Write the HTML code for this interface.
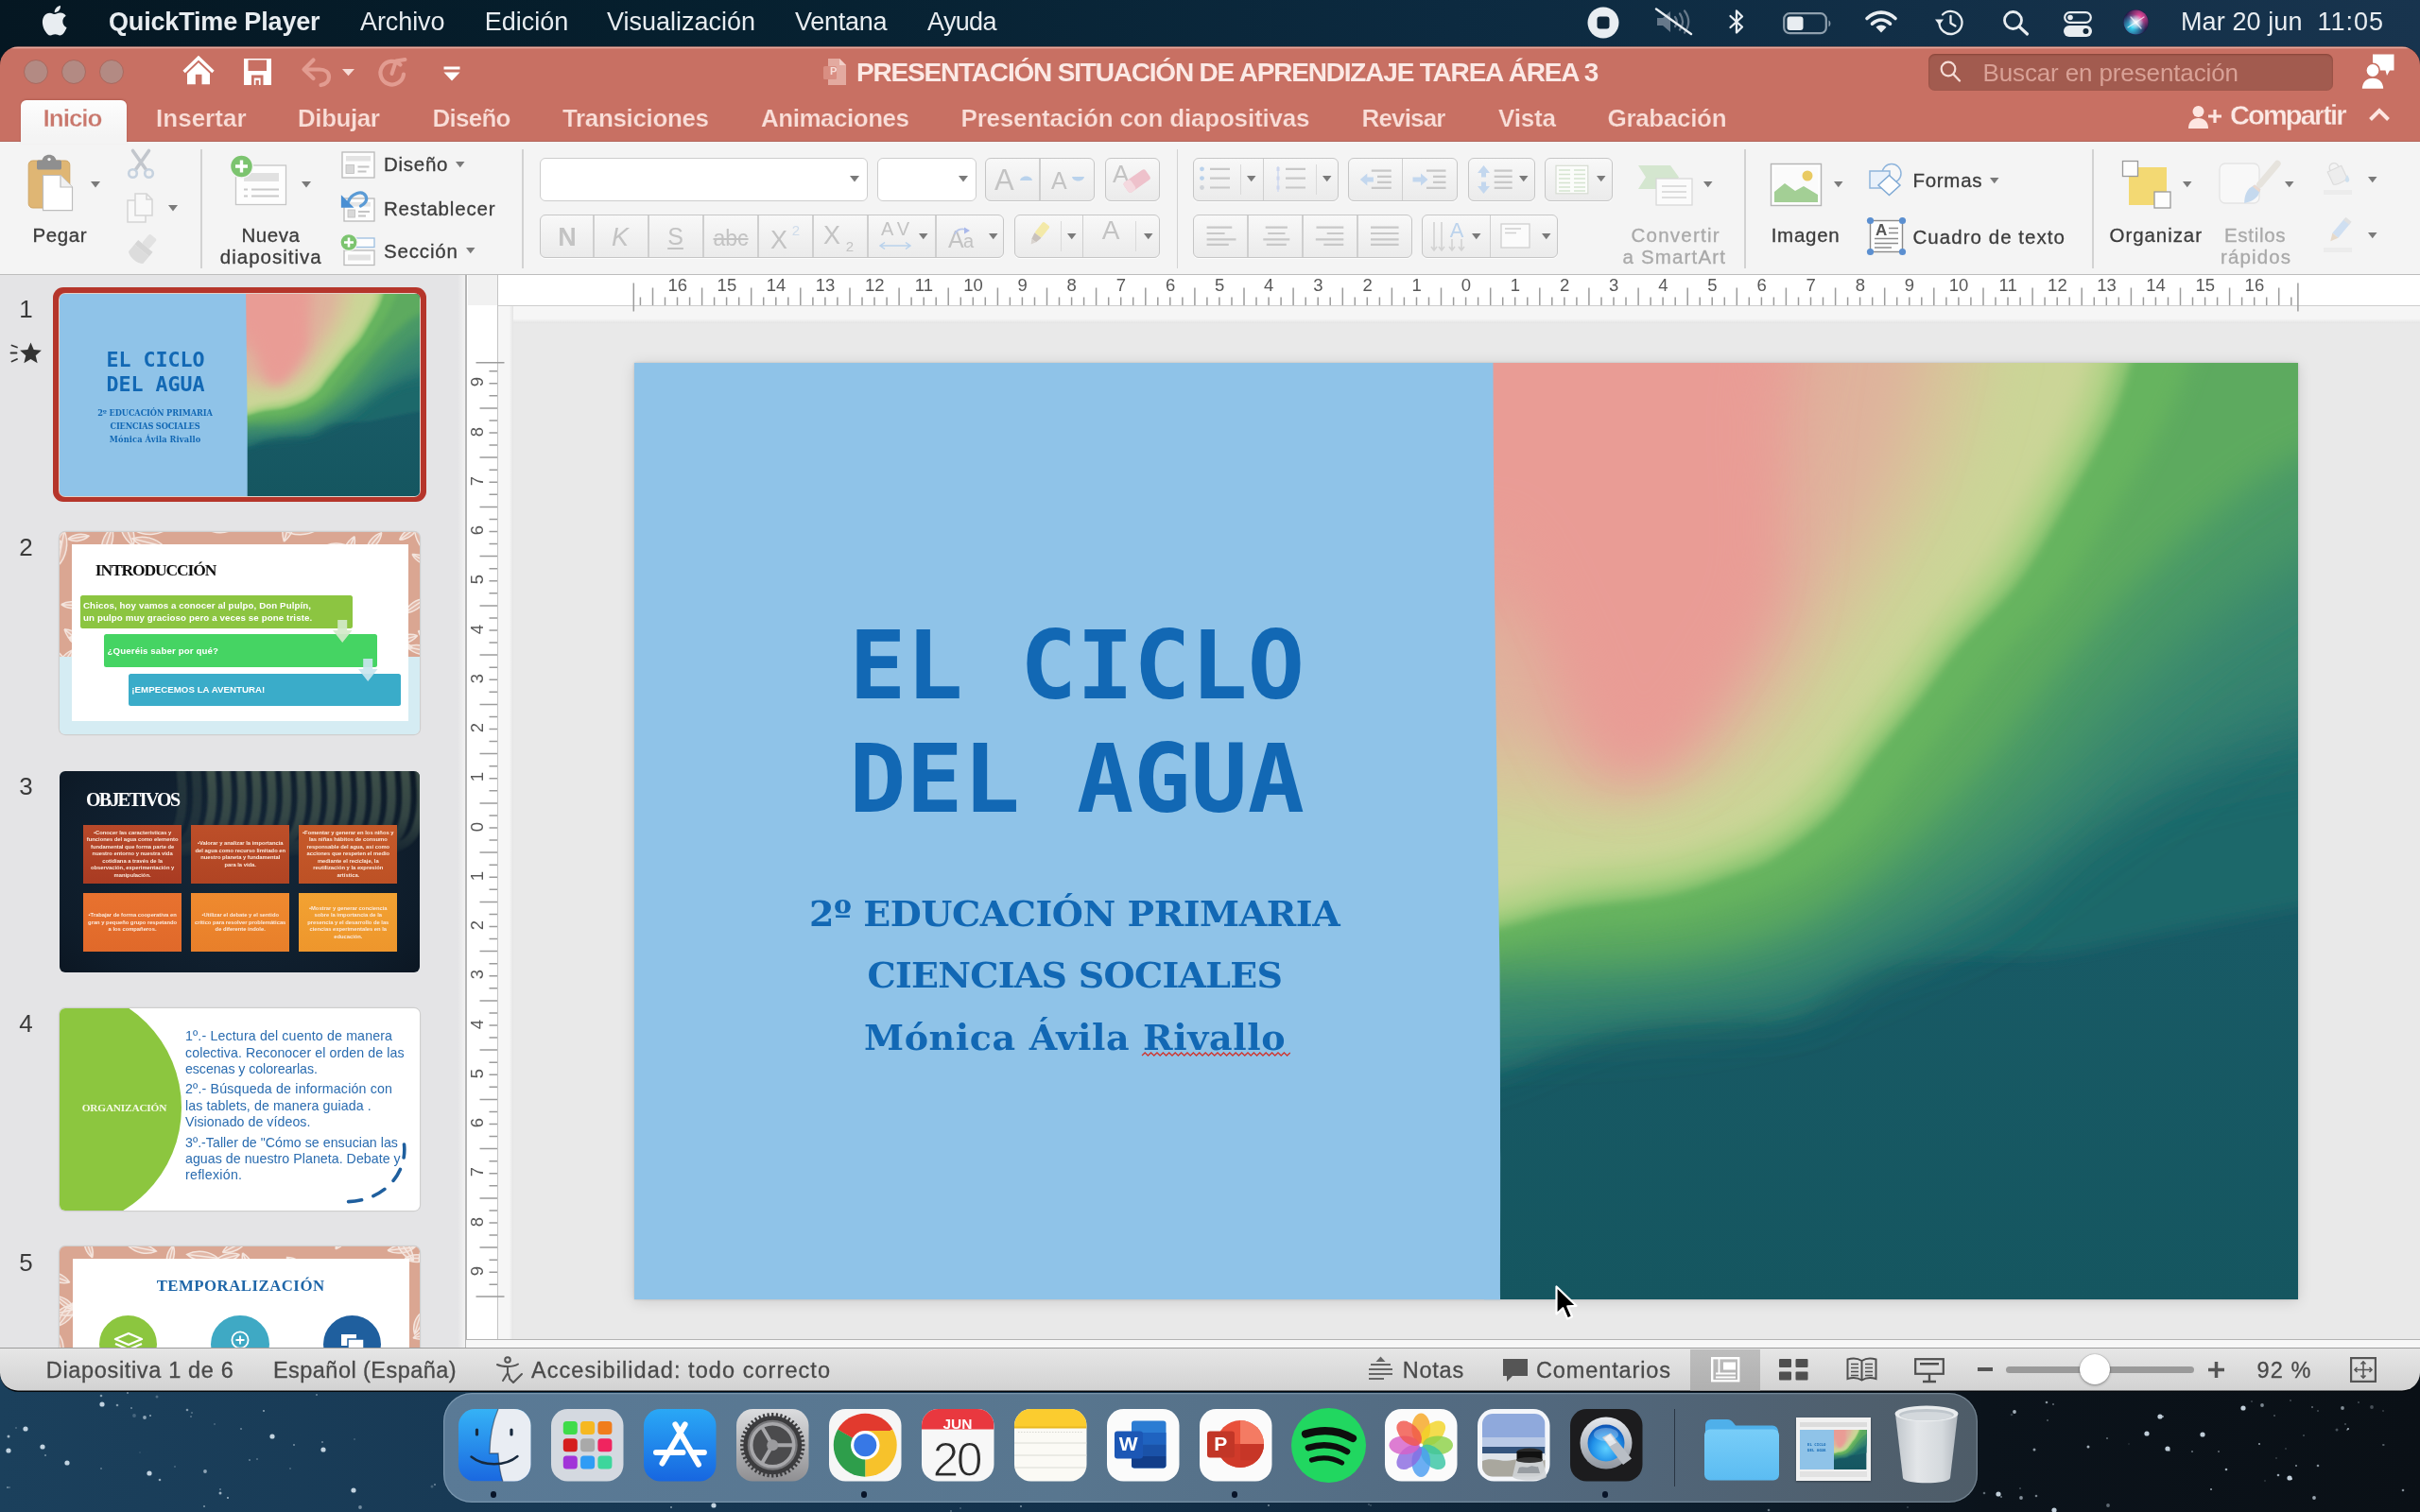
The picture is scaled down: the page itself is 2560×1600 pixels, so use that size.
<!DOCTYPE html>
<html lang="es">
<head>
<meta charset="utf-8">
<title>PRESENTACIÓN SITUACIÓN DE APRENDIZAJE TAREA ÁREA 3</title>
<style>
*{box-sizing:border-box;margin:0;padding:0}
html,body{width:2560px;height:1600px;overflow:hidden}
body{position:relative;font-family:"Liberation Sans",sans-serif;background:#0d2436;color:#222}
.abs{position:absolute}
.t{position:absolute;white-space:nowrap;line-height:1}
svg{position:absolute;overflow:visible}
#root{position:absolute;left:0;top:0;width:2560px;height:1600px;will-change:transform}
#desk{left:0;top:0;width:2560px;height:1600px;background:
 linear-gradient(90deg,#051722 0%,#06202f 30%,#0c2a40 60%,#18344e 100%);}
#deskb{left:0;top:1440px;width:2560px;height:160px;background:
 linear-gradient(90deg,#1b405c 0%,#173853 25%,#12304a 45%,#0d2030 68%,#0b131b 82%,#0a1016 100%);}
#menubar{left:0;top:0;width:2560px;height:50px;color:#e9eef2;font-size:28px}
#menubar .t{top:10px;font-size:28px;color:#e8edf1}
#win{left:0;top:0;width:2560px;height:1600px;clip-path:inset(49.600px 0 128.500px 0 round 19px)}
#winsh{left:0;top:48.600px;width:2560px;height:1424.400px;border-radius:20px;background:#02060a}
#title{left:0;top:49px;width:2560px;height:101px;background:#c87063;border-bottom:1.500px solid #b3665b;box-shadow:inset 0 2.200px .500px rgba(255,208,200,.6)}
#ribbon{left:0;top:149.500px;width:2560px;height:141.500px;background:#f4f4f4;border-bottom:1.500px solid #bdbdbd}
#panel{left:0;top:291px;width:493px;height:1136px;background:#e4e4e6}
#status{left:0;top:1426px;width:2560px;height:46px;background:linear-gradient(#e6e6e6,#d2d2d2);border-top:1.500px solid #9c9c9c}
</style>
</head>
<body>
<div id="root">
<div id="desk" class="abs"></div>
<div id="deskb" class="abs"></div>
<div id="winsh" class="abs"></div>
<div id="menubar" class="abs"><svg style="left:41.5px;top:5.5px;" width="31.5" height="31.5" viewBox="0 0 24 24"><path d="M12.152 6.896c-.948 0-2.415-1.078-3.96-1.04-2.04.027-3.91 1.183-4.961 3.014-2.117 3.675-.546 9.103 1.519 12.09 1.013 1.454 2.208 3.09 3.792 3.039 1.52-.065 2.09-.987 3.935-.987 1.831 0 2.35.987 3.96.948 1.637-.026 2.676-1.48 3.676-2.948 1.156-1.688 1.636-3.325 1.662-3.415-.039-.013-3.182-1.221-3.22-4.857-.026-3.04 2.48-4.494 2.597-4.559-1.429-2.09-3.623-2.324-4.39-2.376-2-.156-3.675 1.09-4.61 1.09zM15.53 3.83c.843-1.012 1.4-2.427 1.245-3.83-1.207.052-2.662.805-3.532 1.818-.78.896-1.454 2.338-1.273 3.714 1.338.104 2.715-.688 3.559-1.701" fill="#e8edf1"/></svg><span class="t" style="left:115.0px;top:10.3px;font-size:27px;color:#e8edf1;font-weight:700;letter-spacing:-0.17px;">QuickTime Player</span><span class="t" style="left:381.0px;top:10.3px;font-size:27px;color:#e8edf1;letter-spacing:-0.09px;">Archivo</span><span class="t" style="left:512.7px;top:10.3px;font-size:27px;color:#e8edf1;letter-spacing:-0.01px;">Edición</span><span class="t" style="left:642.0px;top:10.3px;font-size:27px;color:#e8edf1;letter-spacing:-0.01px;">Visualización</span><span class="t" style="left:841.0px;top:10.3px;font-size:27px;color:#e8edf1;letter-spacing:-0.25px;">Ventana</span><span class="t" style="left:981.0px;top:10.3px;font-size:27px;color:#e8edf1;letter-spacing:-0.64px;">Ayuda</span><span class="t" style="left:2307.0px;top:10.3px;font-size:27px;color:#e8edf1;letter-spacing:0.10px;">Mar 20 jun</span><span class="t" style="left:2451.5px;top:10.3px;font-size:27px;color:#e8edf1;letter-spacing:0.98px;">11:05</span><svg style="left:1679px;top:6.5px;" width="34" height="34" viewBox="0 0 34 34"><circle cx="17" cy="17" r="16.5" fill="#e8edf1"/><rect x="10.5" y="10.5" width="13" height="13" rx="3" fill="#0f2638"/></svg><svg style="left:1750px;top:8px;" width="42" height="30" viewBox="0 0 42 30"><g fill="#66788a"><path d="M3 11h6l8-7v22l-8-7H3z"/></g><g fill="none" stroke="#66788a" stroke-width="2.2" stroke-linecap="round"><path d="M22 10c2.2 3 2.2 7 0 10"/><path d="M27 6.500c4 5.500 4 11.500 0 17"/><path d="M32 3.500c5.500 7.500 5.500 15.500 0 23"/></g><path d="M2 1.500L39 28" stroke="#e8edf1" stroke-width="2.4" stroke-linecap="round"/></svg><svg style="left:1827px;top:9px;" width="20" height="28" viewBox="0 0 20 28"><path d="M3.500 8L16 19.500 10 25.500V2.500L16 8.500 3.500 20" fill="none" stroke="#e8edf1" stroke-width="2.3" stroke-linejoin="round" stroke-linecap="round"/></svg><svg style="left:1886px;top:12.5px;" width="54" height="24" viewBox="0 0 54 24"><rect x="1.200" y="1.200" width="44.600" height="21" rx="6" fill="none" stroke="#8fa0ae" stroke-width="2.200"/><rect x="4.500" y="4.500" width="17" height="14.500" rx="3" fill="#e8edf1"/><path d="M48.500 8.500c2.500.7 2.500 6 0 6.700z" fill="#8fa0ae"/></svg><svg style="left:1972px;top:10px;" width="36" height="26" viewBox="0 0 36 26"><g fill="none" stroke="#e8edf1" stroke-width="3.600" stroke-linecap="round"><path d="M3 9.500c9-8.500 21-8.500 30 0"/><path d="M8.500 15.200c6-5.500 13-5.500 19 0"/></g><path d="M18 24.500l-5.500-5.800c3.300-2.900 7.700-2.900 11 0z" fill="#e8edf1"/></svg><svg style="left:2046px;top:9px;" width="32" height="30" viewBox="0 0 32 30"><g fill="none" stroke="#e8edf1" stroke-width="2.300" stroke-linecap="round" stroke-linejoin="round"><path d="M5.500 15a12 12 0 1 0 3.500-8.500"/><path d="M17.500 8v7.500l5 3"/></g><path d="M1 11.500h9L5.500 17.500z" fill="#e8edf1"/></svg><svg style="left:2118px;top:10px;" width="30" height="28" viewBox="0 0 30 28"><circle cx="11.500" cy="11.500" r="9" fill="none" stroke="#e8edf1" stroke-width="2.800"/><path d="M18.300 18.300L26.500 26" stroke="#e8edf1" stroke-width="3.200" stroke-linecap="round"/></svg><svg style="left:2183px;top:11.5px;" width="30" height="27" viewBox="0 0 30 27"><rect x="1.200" y="1.200" width="27.600" height="10.600" rx="5.300" fill="none" stroke="#e8edf1" stroke-width="2.200"/><circle cx="7" cy="6.500" r="2.800" fill="#e8edf1"/><rect x="0" y="15" width="30" height="12" rx="6" fill="#e8edf1"/><circle cx="23.500" cy="21" r="3" fill="#0f2638"/></svg><svg style="left:2246px;top:10px;" width="27" height="27" viewBox="0 0 27 27"><defs><radialGradient id="siri1" cx="35%" cy="70%" r="55%"><stop offset="0" stop-color="#38e1ff"/><stop offset="1" stop-color="#38e1ff" stop-opacity="0"/></radialGradient><radialGradient id="siri2" cx="65%" cy="30%" r="55%"><stop offset="0" stop-color="#ff4fa3"/><stop offset="1" stop-color="#ff4fa3" stop-opacity="0"/></radialGradient><radialGradient id="siri3" cx="50%" cy="50%" r="30%"><stop offset="0" stop-color="#fff"/><stop offset="1" stop-color="#fff" stop-opacity="0"/></radialGradient></defs><circle cx="13.500" cy="13.500" r="13.500" fill="#231a4a"/><circle cx="13.500" cy="13.500" r="13" fill="url(#siri2)"/><circle cx="13.500" cy="13.500" r="13" fill="url(#siri1)"/><circle cx="13.500" cy="13.500" r="13" fill="url(#siri3)"/><path d="M5 19L22 8M8 8l11 12" stroke="#fff" stroke-width="1.300" opacity=".65" stroke-linecap="round"/></svg></div>
<div id="win" class="abs">
<div id="title" class="abs"></div>
<div id="ribbon" class="abs"></div>
<div class="abs" style="left:24.6px;top:62.8px;width:26.4px;height:26.4px;border-radius:50%;background:#b38a83;border:1.500px solid #a9685e"></div><div class="abs" style="left:64.6px;top:62.8px;width:26.4px;height:26.4px;border-radius:50%;background:#b38a83;border:1.500px solid #a9685e"></div><div class="abs" style="left:104.5px;top:62.8px;width:26.4px;height:26.4px;border-radius:50%;background:#b38a83;border:1.500px solid #a9685e"></div><svg style="left:190px;top:56px;" width="40" height="36" viewBox="0 0 40 36"><path d="M4.600 20L20 5.200 35.500 20" fill="none" stroke="#ffffff" stroke-width="3.400" stroke-linejoin="miter"/><path d="M8 21.800L20 10.300 32 21.800V33.300H23.500V22.800H16.800V33.300H8z" fill="#ffffff"/></svg><svg style="left:258px;top:62px;" width="29" height="28" viewBox="0 0 29 28"><path d="M0 0h29v28H0z" fill="#ffffff"/><rect x="4.500" y="1.500" width="19.500" height="11.500" fill="#c87063"/><rect x="8" y="17.500" width="12.500" height="10.500" fill="#c87063"/><rect x="10.800" y="20.500" width="6.800" height="7.500" fill="#ffffff"/><rect x="12.500" y="23" width="3.400" height="5" fill="#c87063"/></svg><svg style="left:319px;top:61px;" width="34" height="32" viewBox="0 0 34 32"><path d="M12.500 2.500L2.500 12.500l10 9.500" fill="none" stroke="#e29c91" stroke-width="4.200" stroke-linecap="round" stroke-linejoin="round"/><path d="M3.500 12.500h15.500c6 0 10 3.200 10 8S25.500 28 20.500 29" fill="none" stroke="#e29c91" stroke-width="4.200" stroke-linecap="round"/></svg><svg style="left:361.5px;top:73.2px;" width="13" height="7.2" viewBox="0 0 13 7.2"><path d="M0 0H13 L6.5 7.2Z" fill="#f7ddd8"/></svg><svg style="left:399px;top:59px;" width="34" height="35" viewBox="0 0 34 35"><path d="M24.500 9.500A12.300 12.300 0 1 0 28 19.500" fill="none" stroke="#e29c91" stroke-width="4.200" stroke-linecap="round"/><path d="M15.500 19L20 5.500l9.500-1.500" fill="none" stroke="#e29c91" stroke-width="4" stroke-linecap="round" stroke-linejoin="round"/></svg><svg style="left:469px;top:70px;" width="18" height="16" viewBox="0 0 18 16"><rect x="0.500" y="0.500" width="17" height="3" fill="#ffffff"/><path d="M0.500 6.500h17L9 15.500z" fill="#ffffff"/></svg><svg style="left:871px;top:62px;" width="24" height="28" viewBox="0 0 24 28"><path d="M5 0h12l7 7v21H5z" fill="#e3aaa0"/><path d="M17 0l7 7h-7z" fill="#f1cfc8"/><rect x="0" y="8" width="14" height="14" rx="1.500" fill="#d98e82"/></svg><span class="t" style="left:878.0px;top:11.0px;font-size:11px;color:#f6ddd8;font-weight:700;top:70px;">P</span><span class="t" style="left:906.0px;top:63.0px;font-size:28px;color:#fbe9e5;font-weight:700;letter-spacing:-1.19px;">PRESENTACIÓN SITUACIÓN DE APRENDIZAJE TAREA ÁREA 3</span><div class="abs" style="left:2040px;top:57px;width:427.5px;height:38.5px;border-radius:7px;background:#a25b4f;box-shadow:inset 0 1px 2px rgba(80,20,10,.35)"></div><svg style="left:2052px;top:64px;" width="23" height="24" viewBox="0 0 23 24"><circle cx="9" cy="9" r="7.300" fill="none" stroke="#f5dcd6" stroke-width="2.200"/><path d="M14.300 14.500L21 21.500" stroke="#f5dcd6" stroke-width="2.400" stroke-linecap="round"/></svg><span class="t" style="left:2097.5px;top:63.5px;font-size:26px;color:#d9a196;letter-spacing:-0.13px;">Buscar en presentación</span><svg style="left:2497px;top:56px;" width="38" height="40" viewBox="0 0 38 40"><path d="M13 1.500h22.500v17H31l-3 5.500-1.500-5.500H13z" fill="#ffffff"/><circle cx="13" cy="18.500" r="7.200" fill="#ffffff" stroke="#c87062" stroke-width="1.600"/><path d="M1 38.500c0-8 5-12.500 12-12.500s12 4.500 12 12.500z" fill="#ffffff" stroke="#c87062" stroke-width="1.600"/></svg><div class="abs" style="left:22px;top:106px;width:112px;height:46px;background:linear-gradient(#fdfdfd,#f4f4f4 85%);border-radius:6px 6px 0 0;box-shadow:0 -1px 2px rgba(120,40,30,.25)"></div><span class="t" style="left:45.5px;top:112.1px;font-size:26px;color:#c9776c;font-weight:700;letter-spacing:-0.98px;-webkit-text-stroke:.3px #f4f4f4;">Inicio</span><span class="t" style="left:165.0px;top:112.1px;font-size:26px;color:#f9ded8;font-weight:700;letter-spacing:0.02px;-webkit-text-stroke:.22px #c87062;">Insertar</span><span class="t" style="left:315.0px;top:112.1px;font-size:26px;color:#f9ded8;font-weight:700;letter-spacing:-0.43px;-webkit-text-stroke:.22px #c87062;">Dibujar</span><span class="t" style="left:457.5px;top:112.1px;font-size:26px;color:#f9ded8;font-weight:700;letter-spacing:-0.74px;-webkit-text-stroke:.22px #c87062;">Diseño</span><span class="t" style="left:595.0px;top:112.1px;font-size:26px;color:#f9ded8;font-weight:700;letter-spacing:-0.36px;-webkit-text-stroke:.22px #c87062;">Transiciones</span><span class="t" style="left:805.0px;top:112.1px;font-size:26px;color:#f9ded8;font-weight:700;letter-spacing:-0.48px;-webkit-text-stroke:.22px #c87062;">Animaciones</span><span class="t" style="left:1016.5px;top:112.1px;font-size:26px;color:#f9ded8;font-weight:700;letter-spacing:-0.19px;-webkit-text-stroke:.22px #c87062;">Presentación con diapositivas</span><span class="t" style="left:1440.5px;top:112.1px;font-size:26px;color:#f9ded8;font-weight:700;letter-spacing:-0.83px;-webkit-text-stroke:.22px #c87062;">Revisar</span><span class="t" style="left:1585.0px;top:112.1px;font-size:26px;color:#f9ded8;font-weight:700;letter-spacing:-0.17px;-webkit-text-stroke:.22px #c87062;">Vista</span><span class="t" style="left:1700.5px;top:112.1px;font-size:26px;color:#f9ded8;font-weight:700;letter-spacing:-0.32px;-webkit-text-stroke:.22px #c87062;">Grabación</span><svg style="left:2315px;top:111px;" width="36" height="26" viewBox="0 0 36 26"><circle cx="10.500" cy="7" r="6" fill="#fde6e1"/><path d="M0 25c0-7 4-11 10.500-11S21 18 21 25z" fill="#fde6e1"/><path d="M28 5v14M21 12h14" stroke="#fde6e1" stroke-width="3.200"/></svg><span class="t" style="left:2359.0px;top:107.5px;font-size:29px;color:#fbe9e5;font-weight:700;letter-spacing:-1.88px;-webkit-text-stroke:.3px #c87062;">Compartir</span><svg style="left:2505px;top:113px;" width="24" height="16" viewBox="0 0 24 16"><path d="M2.500 13.500L12 4l9.500 9.500" fill="none" stroke="#fde6e1" stroke-width="4" stroke-linejoin="miter"/></svg>
<svg style="left:28px;top:163px;" width="52" height="62" viewBox="0 0 52 62"><rect x="2.200" y="7" width="43.600" height="50" rx="4.500" fill="#dfb674"/><rect x="2.200" y="7" width="43.600" height="50" rx="4.500" fill="none" stroke="#cfa564" stroke-width="1"/><path d="M11 8.200c0-1 .800-1.800 1.800-1.800h3.800c.600-3.200 3.500-5.600 7.400-5.600s6.800 2.400 7.400 5.600h3.800c1 0 1.800.800 1.800 1.800v6.600c0 1-.800 1.800-1.800 1.800H12.800c-1 0-1.800-.800-1.800-1.800z" fill="#8f8f8f"/><circle cx="24" cy="5.600" r="1.700" fill="#f4f4f4"/><path d="M17.500 22.500h18.500L48.500 35V59.700H17.500z" fill="#fff" stroke="#bdbdbd" stroke-width="1.200"/><path d="M36 22.500V35h12.500" fill="#f1f1f1" stroke="#bdbdbd" stroke-width="1.200"/></svg><svg style="left:96px;top:192.3px;" width="10" height="6.5" viewBox="0 0 10 6.5"><path d="M0 0H10 L5 6.5Z" fill="#7a7a7a"/></svg><span class="t" style="left:34.5px;top:238.9px;font-size:20.5px;color:#3c3c3c;letter-spacing:0.57px;-webkit-text-stroke:0.3px #3c3c3c;">Pegar</span><svg style="left:134px;top:156px;" width="30" height="34" viewBox="0 0 30 34"><g fill="none" stroke="#c2c6cc" stroke-width="3.600" stroke-linecap="round"><path d="M6.500 3.500l14 20M23.500 3.500l-14 20"/></g><g fill="none" stroke="#c6d2df" stroke-width="2.600"><circle cx="6.500" cy="27.500" r="4.300"/><circle cx="23.500" cy="27.500" r="4.300"/></g></svg><svg style="left:134px;top:204px;" width="30" height="32" viewBox="0 0 30 32"><g fill="#f8f8f8" stroke="#d4d4d4" stroke-width="1.500"><path d="M1 8h14l5 5v18H1z"/><path d="M9 1h12l6 6v17H9z"/><path d="M21 1v6h6" fill="none"/></g></svg><svg style="left:178px;top:216.5px;" width="10" height="6.5" viewBox="0 0 10 6.5"><path d="M0 0H10 L5 6.5Z" fill="#7a7a7a"/></svg><svg style="left:132px;top:248px;" width="36" height="34" viewBox="0 0 36 34"><g transform="rotate(40 18 17)"><rect x="13" y="-2" width="10" height="13" rx="2" fill="#e2e2e2"/><rect x="8" y="11" width="20" height="6" fill="#d6d6d6"/><path d="M8 17h20v10c-5 4-15 4-20 0z" fill="#dcdcdc"/></g></svg><div class="abs" style="left:212.25px;top:158px;width:1.5px;height:126px;background:#d2d2d2"></div><svg style="left:243px;top:163px;" width="62" height="56" viewBox="0 0 62 56"><rect x="6.500" y="12" width="53" height="41.500" fill="#fdfdfd" stroke="#c6c6c6" stroke-width="1.300"/><rect x="15" y="20" width="37" height="9" fill="#e1e1e1"/><g stroke="#c9c9c9" stroke-width="2"><path d="M15 37.500h4M23 37.500h29M15 44.500h4M23 44.500h29"/></g><circle cx="12.500" cy="13" r="12" fill="#7cc46f" stroke="#f4f4f4" stroke-width="1.500"/><path d="M12.500 6.500v13M6 13h13" stroke="#fff" stroke-width="3.400"/></svg><svg style="left:319px;top:192.3px;" width="10" height="6.5" viewBox="0 0 10 6.5"><path d="M0 0H10 L5 6.5Z" fill="#7a7a7a"/></svg><span class="t" style="left:255.5px;top:238.9px;font-size:20.5px;color:#3c3c3c;letter-spacing:0.56px;-webkit-text-stroke:0.3px #3c3c3c;">Nueva</span><span class="t" style="left:232.8px;top:262.1px;font-size:20.5px;color:#3c3c3c;letter-spacing:1.01px;-webkit-text-stroke:0.3px #3c3c3c;">diapositiva</span><svg style="left:361px;top:160px;" width="36" height="29" viewBox="0 0 36 29"><rect x="1" y="1" width="34" height="27" fill="#fdfdfd" stroke="#b9b9b9" stroke-width="1.300"/><rect x="5" y="5" width="26" height="5.500" fill="#e3e3e3"/><rect x="5" y="14.500" width="8.500" height="9" fill="#d8d8d8" stroke="#bdbdbd" stroke-width=".8"/><g stroke="#c4c4c4" stroke-width="1.800"><path d="M17.500 16.500h12M17.500 21.500h9"/></g></svg><span class="t" style="left:406.0px;top:164.4px;font-size:20.5px;color:#3c3c3c;letter-spacing:0.74px;-webkit-text-stroke:0.3px #3c3c3c;">Diseño</span><svg style="left:481.5px;top:170.5px;" width="9.5" height="6.3" viewBox="0 0 9.5 6.3"><path d="M0 0H9.5 L4.75 6.3Z" fill="#7a7a7a"/></svg><svg style="left:359px;top:200px;" width="40" height="36" viewBox="0 0 40 36"><rect x="5" y="10" width="32" height="24" fill="#fdfdfd" stroke="#b9b9b9" stroke-width="1.300"/><rect x="9" y="14" width="24" height="4.500" fill="#e6e6e6"/><rect x="9" y="22" width="7.500" height="8" fill="#d8d8d8" stroke="#bdbdbd" stroke-width=".8"/><g stroke="#c4c4c4" stroke-width="1.800"><path d="M20 24h12M20 28.500h8"/></g><path d="M9.500 13.500C12 5.500 24 0 28 7.500 30 12 27 16 22.500 18" fill="none" stroke="#5b9bd5" stroke-width="3.300" stroke-linecap="round"/><path d="M1.900 6.200V19.800H15.500z" fill="#4a8fd3"/></svg><span class="t" style="left:406.0px;top:210.6px;font-size:20.5px;color:#3c3c3c;letter-spacing:0.81px;-webkit-text-stroke:0.3px #3c3c3c;">Restablecer</span><svg style="left:359px;top:247px;" width="40" height="36" viewBox="0 0 40 36"><rect x="5" y="5" width="32" height="9.500" fill="#fdfdfd" stroke="#9dbfe0" stroke-width="1.300"/><rect x="5" y="18" width="32" height="15.500" fill="#fdfdfd" stroke="#b9b9b9" stroke-width="1.300"/><rect x="9" y="22.500" width="24" height="6" fill="#e3e3e3"/><circle cx="10" cy="9.500" r="9" fill="#7cc46f" stroke="#f4f4f4" stroke-width="1.300"/><path d="M10 4.500v10M5 9.500h10" stroke="#fff" stroke-width="2.600"/></svg><span class="t" style="left:406.0px;top:256.3px;font-size:20.5px;color:#3c3c3c;letter-spacing:0.84px;-webkit-text-stroke:0.3px #3c3c3c;">Sección</span><svg style="left:492.5px;top:262px;" width="9.5" height="6.3" viewBox="0 0 9.5 6.3"><path d="M0 0H9.5 L4.75 6.3Z" fill="#7a7a7a"/></svg><div class="abs" style="left:552.25px;top:158px;width:1.5px;height:126px;background:#d2d2d2"></div>
<div class="abs" style="left:570.5px;top:166.5px;width:347px;height:46.5px;border:1.400px solid #cdcdcd;border-radius:6px;background:#fff"></div><svg style="left:899px;top:186px;" width="10" height="6.5" viewBox="0 0 10 6.5"><path d="M0 0H10 L5 6.5Z" fill="#7a7a7a"/></svg><div class="abs" style="left:928px;top:166.5px;width:104.5px;height:46.5px;border:1.400px solid #cdcdcd;border-radius:6px;background:#fff"></div><svg style="left:1013.5px;top:186px;" width="10" height="6.5" viewBox="0 0 10 6.5"><path d="M0 0H10 L5 6.5Z" fill="#7a7a7a"/></svg><div class="abs" style="left:1042px;top:166.5px;width:116px;height:46.5px;border:1.400px solid #c6c6c6;border-radius:6px;background:linear-gradient(#f8f8f8,#ebebeb);box-shadow:0 1px 0 rgba(255,255,255,.8)"></div><div class="abs" style="left:1099.4px;top:167.5px;width:1.2px;height:44.5px;background:#cfcfcf"></div><span class="t" style="left:1052.0px;top:174.5px;font-size:31px;color:#c3c3c3;">A</span><svg style="left:1079px;top:183.5px;" width="13" height="7" viewBox="0 0 13 7"><path d="M0 7c1-6 12-6 13 0z" fill="#b9d2ec"/></svg><span class="t" style="left:1112.0px;top:179.0px;font-size:25px;color:#c3c3c3;">A</span><svg style="left:1134px;top:186.5px;" width="13" height="7" viewBox="0 0 13 7"><path d="M0 0c1 6 12 6 13 0z" fill="#b9d2ec"/></svg><div class="abs" style="left:1168.5px;top:166.5px;width:58px;height:46.5px;border:1.400px solid #c6c6c6;border-radius:6px;background:linear-gradient(#f8f8f8,#ebebeb);box-shadow:0 1px 0 rgba(255,255,255,.8)"></div><span class="t" style="left:1177.0px;top:170.5px;font-size:26px;color:#c3c3c3;">A</span><svg style="left:1186px;top:176px;" width="34" height="32" viewBox="0 0 34 32"><g transform="rotate(-35 17 16)"><rect x="3" y="9" width="28" height="13" rx="3" fill="#eec1cb"/><rect x="3" y="9" width="9" height="13" rx="3" fill="#f4d9df"/></g></svg><div class="abs" style="left:570.5px;top:227px;width:491.5px;height:45.5px;border:1.400px solid #c6c6c6;border-radius:6px;background:linear-gradient(#f8f8f8,#ebebeb);box-shadow:0 1px 0 rgba(255,255,255,.8)"></div><div class="abs" style="left:627.4px;top:228px;width:1.2px;height:43.5px;background:#cfcfcf"></div><div class="abs" style="left:685.4px;top:228px;width:1.2px;height:43.5px;background:#cfcfcf"></div><div class="abs" style="left:743.4px;top:228px;width:1.2px;height:43.5px;background:#cfcfcf"></div><div class="abs" style="left:801.4px;top:228px;width:1.2px;height:43.5px;background:#cfcfcf"></div><div class="abs" style="left:859.4px;top:228px;width:1.2px;height:43.5px;background:#cfcfcf"></div><div class="abs" style="left:917.4px;top:228px;width:1.2px;height:43.5px;background:#cfcfcf"></div><div class="abs" style="left:989.4px;top:228px;width:1.2px;height:43.5px;background:#cfcfcf"></div><span class="t" style="left:590.2px;top:238.0px;font-size:27px;color:#c3c3c3;font-weight:700;">N</span><span class="t" style="left:647.0px;top:238.0px;font-size:27px;color:#c3c3c3;font-style:italic;">K</span><span class="t" style="left:706.2px;top:238.0px;font-size:25px;color:#c3c3c3;text-decoration:underline;text-underline-offset:3px;text-decoration-thickness:1.500px;">S</span><span class="t" style="left:754.5px;top:240.5px;font-size:23px;color:#c3c3c3;text-decoration:line-through;text-decoration-thickness:1.500px;">abc</span><span class="t" style="left:815.0px;top:241.0px;font-size:27px;color:#c3c3c3;">X</span><span class="t" style="left:837.8px;top:236.0px;font-size:15px;color:#cfdcea;">2</span><span class="t" style="left:871.0px;top:236.0px;font-size:27px;color:#c3c3c3;">X</span><span class="t" style="left:894.8px;top:253.0px;font-size:15px;color:#c3c3c3;">2</span><span class="t" style="left:932.0px;top:232.0px;font-size:20px;color:#c3c3c3;letter-spacing:4.80px;">AV</span><svg style="left:928px;top:255.5px;" width="38" height="8" viewBox="0 0 38 8"><path d="M4 4h30M8 .500L3 4l5 3.500M30 .500l5 3.500-5 3.500" fill="none" stroke="#b9d2ec" stroke-width="1.500"/></svg><svg style="left:971.5px;top:246.5px;" width="9.5" height="6.3" viewBox="0 0 9.5 6.3"><path d="M0 0H9.5 L4.75 6.3Z" fill="#7a7a7a"/></svg><span class="t" style="left:1003.0px;top:241.0px;font-size:25px;color:#c3c3c3;">A</span><span class="t" style="left:1019.0px;top:245.0px;font-size:20px;color:#c3c3c3;">a</span><svg style="left:1009px;top:240px;" width="18" height="9" viewBox="0 0 18 9"><path d="M1 8c2-6 9-7 13-4" fill="none" stroke="#b9c6ea" stroke-width="1.800"/><path d="M11 .500l6 3.500-6 3.500z" fill="#a9b8ea"/></svg><svg style="left:1045.5px;top:246.5px;" width="9.5" height="6.3" viewBox="0 0 9.5 6.3"><path d="M0 0H9.5 L4.75 6.3Z" fill="#7a7a7a"/></svg><div class="abs" style="left:1072.5px;top:227px;width:154px;height:45.5px;border:1.400px solid #c6c6c6;border-radius:6px;background:linear-gradient(#f8f8f8,#ebebeb);box-shadow:0 1px 0 rgba(255,255,255,.8)"></div><div class="abs" style="left:1145.1px;top:228px;width:1.2px;height:43.5px;background:#cfcfcf"></div><div class="abs" style="left:1121.5px;top:234px;width:1px;height:31.5px;background:#dadada"></div><div class="abs" style="left:1201.3px;top:234px;width:1px;height:31.5px;background:#dadada"></div><svg style="left:1082px;top:233px;" width="32" height="32" viewBox="0 0 32 32"><g transform="rotate(38 16 16)"><rect x="11.500" y="1" width="9" height="15" rx="1.500" fill="#f3e9a8"/><path d="M11.500 16h9l-1.500 7h-6z" fill="#c9c2bd"/><path d="M13 23h6l-3 5z" fill="#d9d4cf"/></g></svg><svg style="left:1129px;top:246.5px;" width="9.5" height="6.3" viewBox="0 0 9.5 6.3"><path d="M0 0H9.5 L4.75 6.3Z" fill="#7a7a7a"/></svg><span class="t" style="left:1165.7px;top:230.0px;font-size:28px;color:#c3c3c3;">A</span><svg style="left:1209.5px;top:246.5px;" width="9.5" height="6.3" viewBox="0 0 9.5 6.3"><path d="M0 0H9.5 L4.75 6.3Z" fill="#7a7a7a"/></svg><div class="abs" style="left:1244.55px;top:158px;width:1.5px;height:126px;background:#d2d2d2"></div><div class="abs" style="left:1262px;top:166.5px;width:153.5px;height:46.5px;border:1.400px solid #c6c6c6;border-radius:6px;background:linear-gradient(#f8f8f8,#ebebeb);box-shadow:0 1px 0 rgba(255,255,255,.8)"></div><div class="abs" style="left:1336.1px;top:167.5px;width:1.2px;height:44.5px;background:#cfcfcf"></div><div class="abs" style="left:1311.5px;top:173.5px;width:1px;height:32.5px;background:#dadada"></div><div class="abs" style="left:1391.5px;top:173.5px;width:1px;height:32.5px;background:#dadada"></div><svg style="left:1267px;top:174px;" width="40" height="32" viewBox="0 0 40 32"><g fill="#b9d2ec"><circle cx="4.500" cy="4.800" r="2.400"/><circle cx="4.500" cy="14.600" r="2.400"/><circle cx="4.500" cy="24.500" r="2.400" fill="#cfd3d8"/></g><g stroke="#c8c8c8" stroke-width="2.200"><path d="M13 4.800h21M13 14.600h21M13 24.500h21"/></g></svg><svg style="left:1319px;top:186px;" width="9.5" height="6.3" viewBox="0 0 9.5 6.3"><path d="M0 0H9.5 L4.75 6.3Z" fill="#7a7a7a"/></svg><svg style="left:1347px;top:174px;" width="40" height="32" viewBox="0 0 40 32"><path d="M5 2v27" stroke="#d3dcf0" stroke-width="1.600"/><g fill="#cdd6ee"><rect x="3.500" y="3" width="3" height="4"/><rect x="3.500" y="12.600" width="3" height="4"/><rect x="3.500" y="22.500" width="3" height="4"/></g><g stroke="#c8c8c8" stroke-width="2.200"><path d="M13 4.800h21M13 14.600h21M13 24.500h21"/></g></svg><svg style="left:1399px;top:186px;" width="9.5" height="6.3" viewBox="0 0 9.5 6.3"><path d="M0 0H9.5 L4.75 6.3Z" fill="#7a7a7a"/></svg><div class="abs" style="left:1426px;top:166.5px;width:116px;height:46.5px;border:1.400px solid #c6c6c6;border-radius:6px;background:linear-gradient(#f8f8f8,#ebebeb);box-shadow:0 1px 0 rgba(255,255,255,.8)"></div><div class="abs" style="left:1483.1px;top:167.5px;width:1.2px;height:44.5px;background:#cfcfcf"></div><svg style="left:1436px;top:175px;" width="40" height="30" viewBox="0 0 40 30"><g stroke="#c8c8c8" stroke-width="2.200"><path d="M14.800 5.600h21M21 11.800h14.800M21 17.900h14.800M14.800 23.900h21"/></g><path d="M2.800 15l7.500-6.500v4h6.600v5h-6.600v4z" fill="#c3d7ee"/></svg><svg style="left:1493px;top:175px;" width="40" height="30" viewBox="0 0 40 30"><g stroke="#c8c8c8" stroke-width="2.200"><path d="M16 5.600h20.500M23 11.800h13.500M23 17.900h13.500M16 23.900h20.500"/></g><path d="M17.500 15l-7.500-6.500v4H1.500v5H10v4z" fill="#c3d7ee"/></svg><div class="abs" style="left:1552.5px;top:166.5px;width:71.5px;height:46.5px;border:1.400px solid #c6c6c6;border-radius:6px;background:linear-gradient(#f8f8f8,#ebebeb);box-shadow:0 1px 0 rgba(255,255,255,.8)"></div><svg style="left:1560px;top:174px;" width="42" height="32" viewBox="0 0 42 32"><path d="M9.500 1l6.500 8h-4v4.500h-5V9H3zM9.500 31l6.500-8h-4v-4.500h-5V23H3z" fill="#c3d7ee"/><g stroke="#c8c8c8" stroke-width="2.200"><path d="M20.700 6.600h19M20.700 12.800h19M20.700 18.900h19M20.700 24.900h19"/></g></svg><svg style="left:1607px;top:186px;" width="9.5" height="6.3" viewBox="0 0 9.5 6.3"><path d="M0 0H9.5 L4.75 6.3Z" fill="#7a7a7a"/></svg><div class="abs" style="left:1633.5px;top:166.5px;width:72.5px;height:46.5px;border:1.400px solid #c6c6c6;border-radius:6px;background:linear-gradient(#f8f8f8,#ebebeb);box-shadow:0 1px 0 rgba(255,255,255,.8)"></div><svg style="left:1645px;top:174px;" width="36" height="32" viewBox="0 0 36 32"><rect x="1" y="1.300" width="33.800" height="29.500" fill="#fbfcfa" stroke="#d6dcd2" stroke-width="1.200"/><g stroke="#d5e3d0" stroke-width="1.600"><path d="M4 6h12M4 10.500h12M4 15h12M4 19.500h12M4 24h12M4 28h12M20 6h12M20 10.500h12M20 15h12M20 19.500h12M20 24h12M20 28h12"/></g></svg><svg style="left:1689px;top:186px;" width="9.5" height="6.3" viewBox="0 0 9.5 6.3"><path d="M0 0H9.5 L4.75 6.3Z" fill="#7a7a7a"/></svg><div class="abs" style="left:1262px;top:227px;width:231.7px;height:45.5px;border:1.400px solid #c6c6c6;border-radius:6px;background:linear-gradient(#f8f8f8,#ebebeb);box-shadow:0 1px 0 rgba(255,255,255,.8)"></div><div class="abs" style="left:1319.4px;top:228px;width:1.2px;height:43.5px;background:#cfcfcf"></div><div class="abs" style="left:1377.4px;top:228px;width:1.2px;height:43.5px;background:#cfcfcf"></div><div class="abs" style="left:1435.4px;top:228px;width:1.2px;height:43.5px;background:#cfcfcf"></div><svg style="left:1274px;top:236px;" width="36" height="28" viewBox="0 0 36 28"><g stroke="#c8c8c8" stroke-width="2.200"><path d="M2.600 4.600h26.700M2.600 11h19M2.600 17.300h30.900M2.600 22.900h23.200"/></g></svg><svg style="left:1332px;top:236px;" width="36" height="28" viewBox="0 0 36 28"><g stroke="#c8c8c8" stroke-width="2.200"><path d="M6.700 4.600h23.200M9.200 11h18.300M4.300 17.300h28M7.800 22.900h21"/></g></svg><svg style="left:1390px;top:236px;" width="36" height="28" viewBox="0 0 36 28"><g stroke="#c8c8c8" stroke-width="2.200"><path d="M2.500 4.600h28.800M13.700 11h17.600M1.800 17.300h29.500M10.300 22.900h21"/></g></svg><svg style="left:1448px;top:236px;" width="36" height="28" viewBox="0 0 36 28"><g stroke="#c8c8c8" stroke-width="2.200"><path d="M2 4.600h29.600M2 11h29.600M2 17.300h29.600M2 22.900h29.600"/></g></svg><div class="abs" style="left:1504px;top:227px;width:143.7px;height:45.5px;border:1.400px solid #c6c6c6;border-radius:6px;background:linear-gradient(#f8f8f8,#ebebeb);box-shadow:0 1px 0 rgba(255,255,255,.8)"></div><div class="abs" style="left:1575.7px;top:228px;width:1.2px;height:43.5px;background:#cfcfcf"></div><svg style="left:1512px;top:233px;" width="46" height="36" viewBox="0 0 46 36"><g stroke="#d3d3d3" stroke-width="1.600" fill="none"><path d="M5 2v30M2 28l3 4 3-4M13 2v30M10 28l3 4 3-4M24 20v12M21 28l3 4 3-4M34 20v12M31 28l3 4 3-4"/></g></svg><span class="t" style="left:1533.7px;top:233.0px;font-size:22px;color:#bcd3ec;">A</span><svg style="left:1557px;top:246.5px;" width="9.5" height="6.3" viewBox="0 0 9.5 6.3"><path d="M0 0H9.5 L4.75 6.3Z" fill="#7a7a7a"/></svg><svg style="left:1587px;top:236px;" width="34" height="28" viewBox="0 0 34 28"><rect x="1" y="1" width="30" height="25" fill="#fbfbfb" stroke="#d0d0d0" stroke-width="1.300"/><g stroke="#d0d0d0" stroke-width="1.600"><path d="M5 6h17M5 10.500h12"/></g></svg><svg style="left:1631px;top:246.5px;" width="9.5" height="6.3" viewBox="0 0 9.5 6.3"><path d="M0 0H9.5 L4.75 6.3Z" fill="#7a7a7a"/></svg>
<svg style="left:1730px;top:172px;" width="64" height="48" viewBox="0 0 64 48"><path d="M3 3h34l9 12.500-9 12.500H3l8-12.500z" fill="#d4e6cf"/><rect x="22" y="17" width="38" height="28" fill="#fbfbfb" stroke="#d6d6d6" stroke-width="1.200"/><g stroke="#dedede" stroke-width="1.800"><path d="M28 25h26M28 31h26M28 37h26"/></g></svg><svg style="left:1801.5px;top:192.3px;" width="9.5" height="6.3" viewBox="0 0 9.5 6.3"><path d="M0 0H9.5 L4.75 6.3Z" fill="#7a7a7a"/></svg><span class="t" style="left:1725.5px;top:238.9px;font-size:20.5px;color:#a9a9a9;letter-spacing:1.23px;-webkit-text-stroke:0.3px #a9a9a9;">Convertir</span><span class="t" style="left:1716.5px;top:262.1px;font-size:20.5px;color:#a9a9a9;letter-spacing:1.17px;-webkit-text-stroke:0.3px #a9a9a9;">a SmartArt</span><div class="abs" style="left:1845.25px;top:158px;width:1.5px;height:126px;background:#d2d2d2"></div><svg style="left:1872px;top:172px;" width="58" height="48" viewBox="0 0 58 48"><rect x="1.500" y="1.500" width="53" height="44" fill="#fdfdfd" stroke="#b5b5b5" stroke-width="1.400"/><rect x="5" y="5" width="46" height="37" fill="#fbfbfb"/><circle cx="40" cy="14" r="5.500" fill="#e9ca62"/><path d="M5 42V31l11-9 11 8 9-5 15 9v8z" fill="#a3cf95"/></svg><svg style="left:1939.5px;top:192.3px;" width="9.5" height="6.3" viewBox="0 0 9.5 6.3"><path d="M0 0H9.5 L4.75 6.3Z" fill="#7a7a7a"/></svg><span class="t" style="left:1873.7px;top:238.9px;font-size:20.5px;color:#3c3c3c;letter-spacing:0.72px;-webkit-text-stroke:0.3px #3c3c3c;">Imagen</span><svg style="left:1976px;top:172px;" width="40" height="36" viewBox="0 0 40 36"><circle cx="25" cy="11.500" r="10" fill="#f7f7f7" stroke="#8fb5dc" stroke-width="1.500"/><rect x="2" y="9" width="21" height="18" fill="#e9f1fa" stroke="#8fb5dc" stroke-width="1.500"/><path d="M22.500 13.500l11.500 10.500-11.500 10.500L11 24z" fill="#fdfdfd" stroke="#7fa9d4" stroke-width="1.500"/></svg><span class="t" style="left:2023.5px;top:181.2px;font-size:20.5px;color:#3c3c3c;letter-spacing:0.70px;-webkit-text-stroke:0.3px #3c3c3c;">Formas</span><svg style="left:2104.5px;top:187.5px;" width="9.5" height="6.3" viewBox="0 0 9.5 6.3"><path d="M0 0H9.5 L4.75 6.3Z" fill="#7a7a7a"/></svg><svg style="left:1974px;top:229px;" width="44" height="42" viewBox="0 0 44 42"><rect x="4.500" y="4.500" width="34" height="33" fill="#fdfdfd" stroke="#8a8a8a" stroke-width="1.400"/><g stroke="#8d8d8d" stroke-width="1.600"><path d="M24 12.500h10M24 17.500h10M9 23.500h25M9 28.500h25M9 33h18"/></g><g fill="#5b8fd0"><circle cx="4.500" cy="4.500" r="3.600"/><circle cx="38.500" cy="4.500" r="3.600"/><circle cx="4.500" cy="37.500" r="3.600"/><circle cx="38.500" cy="37.500" r="3.600"/></g></svg><span class="t" style="left:1984.0px;top:234.5px;font-size:17px;color:#555;font-weight:700;">A</span><span class="t" style="left:2023.5px;top:241.3px;font-size:20.5px;color:#3c3c3c;letter-spacing:1.04px;-webkit-text-stroke:0.3px #3c3c3c;">Cuadro de texto</span><div class="abs" style="left:2213.25px;top:158px;width:1.5px;height:126px;background:#d2d2d2"></div><svg style="left:2244px;top:169px;" width="56" height="54" viewBox="0 0 56 54"><rect x="8" y="8" width="40" height="40" fill="#f3d973"/><rect x="1.500" y="1.500" width="16" height="16" fill="#fdfdfd" stroke="#9a9a9a" stroke-width="1.300"/><rect x="35" y="34" width="17" height="17" fill="#fdfdfd" stroke="#9a9a9a" stroke-width="1.300"/></svg><svg style="left:2308.5px;top:192.3px;" width="9.5" height="6.3" viewBox="0 0 9.5 6.3"><path d="M0 0H9.5 L4.75 6.3Z" fill="#7a7a7a"/></svg><span class="t" style="left:2231.5px;top:238.9px;font-size:20.5px;color:#3c3c3c;letter-spacing:0.94px;-webkit-text-stroke:0.3px #3c3c3c;">Organizar</span><svg style="left:2346px;top:170px;" width="66" height="54" viewBox="0 0 66 54"><rect x="2" y="3" width="42" height="42" rx="6" fill="#f8f8f8" stroke="#e4e4e4" stroke-width="1.300"/><g transform="rotate(40 40 30)"><rect x="37" y="-9" width="7" height="36" rx="3.500" fill="#e6e3dd"/><path d="M36.500 27h8l2 7c0 7-3 11-6 15-3-4-6-8-6-15z" fill="#c5d9ee"/><path d="M36.500 27h8l.800 3h-9.600z" fill="#ead9cf"/></g></svg><svg style="left:2417px;top:192.3px;" width="9.5" height="6.3" viewBox="0 0 9.5 6.3"><path d="M0 0H9.5 L4.75 6.3Z" fill="#7a7a7a"/></svg><span class="t" style="left:2353.0px;top:238.9px;font-size:20.5px;color:#a9a9a9;letter-spacing:0.68px;-webkit-text-stroke:0.3px #a9a9a9;">Estilos</span><span class="t" style="left:2349.0px;top:262.1px;font-size:20.5px;color:#a9a9a9;letter-spacing:1.12px;-webkit-text-stroke:0.3px #a9a9a9;">rápidos</span><svg style="left:2456px;top:168px;" width="36" height="40" viewBox="0 0 36 40"><g transform="rotate(-25 16 16)"><path d="M8 10h16v14c0 3-16 3-16 0z" fill="#ededed" stroke="#dcdcdc" stroke-width="1.200"/><path d="M11 10c0-8 10-8 10 0" fill="none" stroke="#dcdcdc" stroke-width="1.500"/></g><path d="M27 17c3 5 3 7 0 8-3-1-3-3 0-8z" fill="#cfe0ee"/><rect x="2" y="33" width="30" height="5" fill="#ececec"/></svg><svg style="left:2504.5px;top:186.5px;" width="9.5" height="6.3" viewBox="0 0 9.5 6.3"><path d="M0 0H9.5 L4.75 6.3Z" fill="#7a7a7a"/></svg><svg style="left:2456px;top:231px;" width="36" height="38" viewBox="0 0 36 38"><g transform="rotate(40 17 15)"><rect x="13" y="-1" width="8" height="20" fill="#cfdff1"/><path d="M13 19h8l-4 8z" fill="#e6d9c9"/><rect x="13" y="-3" width="8" height="4" fill="#e1e1e1"/></g><rect x="2" y="31" width="30" height="5" fill="#ececec"/></svg><svg style="left:2504.5px;top:246px;" width="9.5" height="6.3" viewBox="0 0 9.5 6.3"><path d="M0 0H9.5 L4.75 6.3Z" fill="#7a7a7a"/></svg>
<div class="abs" style="left:493px;top:291px;width:2067px;height:1136px;background:#e9e9e9"></div><div class="abs" style="left:526px;top:323px;width:2034px;height:18.5px;background:linear-gradient(#f6f6f6 75%,#e4e4e4)"></div><div class="abs" style="left:526px;top:323px;width:16.5px;height:1095px;background:linear-gradient(90deg,#f6f6f6 75%,#e4e4e4)"></div><div class="abs" style="left:493px;top:291px;width:2067px;height:32.5px;background:#fff;border-bottom:1.500px solid #cdcdcd"></div><div class="abs" style="left:493px;top:291px;width:33.5px;height:1127px;background:#fff;border-right:1.500px solid #c4c4c4;border-left:1.500px solid #b5b5b5"></div><div class="abs" style="left:494.5px;top:291px;width:31px;height:32px;background:#f1f1f1"></div><svg style="left:0px;top:0px;" width="2560" height="340" viewBox="0 0 2560 340"><path d="M677.4 314.5V323M690.5 304.5V323M703.5 314.5V323M716.5 314.5V323M729.6 314.5V323M742.6 304.5V323M755.6 314.5V323M768.6 314.5V323M781.7 314.5V323M794.7 304.5V323M807.7 314.5V323M820.8 314.5V323M833.8 314.5V323M846.8 304.5V323M859.9 314.5V323M872.9 314.5V323M885.9 314.5V323M899.0 304.5V323M912.0 314.5V323M925.0 314.5V323M938.1 314.5V323M951.1 304.5V323M964.1 314.5V323M977.2 314.5V323M990.2 314.5V323M1003.2 304.5V323M1016.3 314.5V323M1029.3 314.5V323M1042.3 314.5V323M1055.4 304.5V323M1068.4 314.5V323M1081.4 314.5V323M1094.5 314.5V323M1107.5 304.5V323M1120.5 314.5V323M1133.6 314.5V323M1146.6 314.5V323M1159.6 304.5V323M1172.7 314.5V323M1185.7 314.5V323M1198.7 314.5V323M1211.8 304.5V323M1224.8 314.5V323M1237.8 314.5V323M1250.9 314.5V323M1263.9 304.5V323M1276.9 314.5V323M1289.9 314.5V323M1303.0 314.5V323M1316.0 304.5V323M1329.0 314.5V323M1342.1 314.5V323M1355.1 314.5V323M1368.1 304.5V323M1381.2 314.5V323M1394.2 314.5V323M1407.2 314.5V323M1420.3 304.5V323M1433.3 314.5V323M1446.3 314.5V323M1459.4 314.5V323M1472.4 304.5V323M1485.4 314.5V323M1498.5 314.5V323M1511.5 314.5V323M1524.5 304.5V323M1537.6 314.5V323M1550.6 314.5V323M1563.6 314.5V323M1576.7 304.5V323M1589.7 314.5V323M1602.7 314.5V323M1615.8 314.5V323M1628.8 304.5V323M1641.8 314.5V323M1654.9 314.5V323M1667.9 314.5V323M1680.9 304.5V323M1694.0 314.5V323M1707.0 314.5V323M1720.0 314.5V323M1733.1 304.5V323M1746.1 314.5V323M1759.1 314.5V323M1772.2 314.5V323M1785.2 304.5V323M1798.2 314.5V323M1811.2 314.5V323M1824.3 314.5V323M1837.3 304.5V323M1850.3 314.5V323M1863.4 314.5V323M1876.4 314.5V323M1889.4 304.5V323M1902.5 314.5V323M1915.5 314.5V323M1928.5 314.5V323M1941.6 304.5V323M1954.6 314.5V323M1967.6 314.5V323M1980.7 314.5V323M1993.7 304.5V323M2006.7 314.5V323M2019.8 314.5V323M2032.8 314.5V323M2045.8 304.5V323M2058.9 314.5V323M2071.9 314.5V323M2084.9 314.5V323M2098.0 304.5V323M2111.0 314.5V323M2124.0 314.5V323M2137.1 314.5V323M2150.1 304.5V323M2163.1 314.5V323M2176.2 314.5V323M2189.2 314.5V323M2202.2 304.5V323M2215.3 314.5V323M2228.3 314.5V323M2241.3 314.5V323M2254.4 304.5V323M2267.4 314.5V323M2280.4 314.5V323M2293.5 314.5V323M2306.5 304.5V323M2319.5 314.5V323M2332.6 314.5V323M2345.6 314.5V323M2358.6 304.5V323M2371.6 314.5V323M2384.7 314.5V323M2397.7 314.5V323M2410.7 304.5V323M2423.8 314.5V323M670.3 299.500V329.500M2430.900 299.500V329.500" stroke="#9c9c9c" stroke-width="1.500" fill="none"/></svg><span class="t" style="left:706.4px;top:293.0px;font-size:18.5px;color:#585858;">16</span><span class="t" style="left:758.6px;top:293.0px;font-size:18.5px;color:#585858;">15</span><span class="t" style="left:810.7px;top:293.0px;font-size:18.5px;color:#585858;">14</span><span class="t" style="left:862.8px;top:293.0px;font-size:18.5px;color:#585858;">13</span><span class="t" style="left:915.0px;top:293.0px;font-size:18.5px;color:#585858;">12</span><span class="t" style="left:967.8px;top:293.0px;font-size:18.5px;color:#585858;">11</span><span class="t" style="left:1019.2px;top:293.0px;font-size:18.5px;color:#585858;">10</span><span class="t" style="left:1076.5px;top:293.0px;font-size:18.5px;color:#585858;">9</span><span class="t" style="left:1128.6px;top:293.0px;font-size:18.5px;color:#585858;">8</span><span class="t" style="left:1180.7px;top:293.0px;font-size:18.5px;color:#585858;">7</span><span class="t" style="left:1232.9px;top:293.0px;font-size:18.5px;color:#585858;">6</span><span class="t" style="left:1285.0px;top:293.0px;font-size:18.5px;color:#585858;">5</span><span class="t" style="left:1337.1px;top:293.0px;font-size:18.5px;color:#585858;">4</span><span class="t" style="left:1389.3px;top:293.0px;font-size:18.5px;color:#585858;">3</span><span class="t" style="left:1441.4px;top:293.0px;font-size:18.5px;color:#585858;">2</span><span class="t" style="left:1493.5px;top:293.0px;font-size:18.5px;color:#585858;">1</span><span class="t" style="left:1545.7px;top:293.0px;font-size:18.5px;color:#585858;">0</span><span class="t" style="left:1597.8px;top:293.0px;font-size:18.5px;color:#585858;">1</span><span class="t" style="left:1649.9px;top:293.0px;font-size:18.5px;color:#585858;">2</span><span class="t" style="left:1702.0px;top:293.0px;font-size:18.5px;color:#585858;">3</span><span class="t" style="left:1754.2px;top:293.0px;font-size:18.5px;color:#585858;">4</span><span class="t" style="left:1806.3px;top:293.0px;font-size:18.5px;color:#585858;">5</span><span class="t" style="left:1858.4px;top:293.0px;font-size:18.5px;color:#585858;">6</span><span class="t" style="left:1910.6px;top:293.0px;font-size:18.5px;color:#585858;">7</span><span class="t" style="left:1962.7px;top:293.0px;font-size:18.5px;color:#585858;">8</span><span class="t" style="left:2014.8px;top:293.0px;font-size:18.5px;color:#585858;">9</span><span class="t" style="left:2061.8px;top:293.0px;font-size:18.5px;color:#585858;">10</span><span class="t" style="left:2114.6px;top:293.0px;font-size:18.5px;color:#585858;">11</span><span class="t" style="left:2166.1px;top:293.0px;font-size:18.5px;color:#585858;">12</span><span class="t" style="left:2218.2px;top:293.0px;font-size:18.5px;color:#585858;">13</span><span class="t" style="left:2270.3px;top:293.0px;font-size:18.5px;color:#585858;">14</span><span class="t" style="left:2322.5px;top:293.0px;font-size:18.5px;color:#585858;">15</span><span class="t" style="left:2374.6px;top:293.0px;font-size:18.5px;color:#585858;">16</span><svg style="left:0px;top:0px;" width="540" height="1430" viewBox="0 0 540 1430"><path d="M517.5 392.7H526M517.5 405.8H526M517.5 418.8H526M507.5 431.9H526M517.5 444.9H526M517.5 458.0H526M517.5 471.1H526M507.5 484.1H526M517.5 497.2H526M517.5 510.2H526M517.5 523.3H526M507.5 536.4H526M517.5 549.4H526M517.5 562.5H526M517.5 575.6H526M507.5 588.6H526M517.5 601.7H526M517.5 614.8H526M517.5 627.8H526M507.5 640.9H526M517.5 653.9H526M517.5 667.0H526M517.5 680.1H526M507.5 693.1H526M517.5 706.2H526M517.5 719.2H526M517.5 732.3H526M507.5 745.4H526M517.5 758.4H526M517.5 771.5H526M517.5 784.6H526M507.5 797.6H526M517.5 810.7H526M517.5 823.8H526M517.5 836.8H526M507.5 849.9H526M517.5 862.9H526M517.5 876.0H526M517.5 889.1H526M507.5 902.1H526M517.5 915.2H526M517.5 928.2H526M517.5 941.3H526M507.5 954.4H526M517.5 967.4H526M517.5 980.5H526M517.5 993.6H526M507.5 1006.6H526M517.5 1019.7H526M517.5 1032.8H526M517.5 1045.8H526M507.5 1058.9H526M517.5 1071.9H526M517.5 1085.0H526M517.5 1098.1H526M507.5 1111.1H526M517.5 1124.2H526M517.5 1137.2H526M517.5 1150.3H526M507.5 1163.4H526M517.5 1176.4H526M517.5 1189.5H526M517.5 1202.6H526M507.5 1215.6H526M517.5 1228.7H526M517.5 1241.8H526M517.5 1254.8H526M507.5 1267.9H526M517.5 1280.9H526M517.5 1294.0H526M517.5 1307.1H526M507.5 1320.1H526M517.5 1333.2H526M517.5 1346.2H526M517.5 1359.3H526M503.500 383.800H533.500M503.500 1372H533.500" stroke="#9c9c9c" stroke-width="1.500" fill="none"/></svg><span class="t" style="left:505.0px;top:404.2px;font-size:18.500px;color:#585858;transform:translate(-50%,-50%) rotate(-90deg)">9</span><span class="t" style="left:505.0px;top:456.5px;font-size:18.500px;color:#585858;transform:translate(-50%,-50%) rotate(-90deg)">8</span><span class="t" style="left:505.0px;top:508.8px;font-size:18.500px;color:#585858;transform:translate(-50%,-50%) rotate(-90deg)">7</span><span class="t" style="left:505.0px;top:561.0px;font-size:18.500px;color:#585858;transform:translate(-50%,-50%) rotate(-90deg)">6</span><span class="t" style="left:505.0px;top:613.2px;font-size:18.500px;color:#585858;transform:translate(-50%,-50%) rotate(-90deg)">5</span><span class="t" style="left:505.0px;top:665.5px;font-size:18.500px;color:#585858;transform:translate(-50%,-50%) rotate(-90deg)">4</span><span class="t" style="left:505.0px;top:717.8px;font-size:18.500px;color:#585858;transform:translate(-50%,-50%) rotate(-90deg)">3</span><span class="t" style="left:505.0px;top:770.0px;font-size:18.500px;color:#585858;transform:translate(-50%,-50%) rotate(-90deg)">2</span><span class="t" style="left:505.0px;top:822.2px;font-size:18.500px;color:#585858;transform:translate(-50%,-50%) rotate(-90deg)">1</span><span class="t" style="left:505.0px;top:874.5px;font-size:18.500px;color:#585858;transform:translate(-50%,-50%) rotate(-90deg)">0</span><span class="t" style="left:505.0px;top:926.8px;font-size:18.500px;color:#585858;transform:translate(-50%,-50%) rotate(-90deg)">1</span><span class="t" style="left:505.0px;top:979.0px;font-size:18.500px;color:#585858;transform:translate(-50%,-50%) rotate(-90deg)">2</span><span class="t" style="left:505.0px;top:1031.2px;font-size:18.500px;color:#585858;transform:translate(-50%,-50%) rotate(-90deg)">3</span><span class="t" style="left:505.0px;top:1083.5px;font-size:18.500px;color:#585858;transform:translate(-50%,-50%) rotate(-90deg)">4</span><span class="t" style="left:505.0px;top:1135.8px;font-size:18.500px;color:#585858;transform:translate(-50%,-50%) rotate(-90deg)">5</span><span class="t" style="left:505.0px;top:1188.0px;font-size:18.500px;color:#585858;transform:translate(-50%,-50%) rotate(-90deg)">6</span><span class="t" style="left:505.0px;top:1240.2px;font-size:18.500px;color:#585858;transform:translate(-50%,-50%) rotate(-90deg)">7</span><span class="t" style="left:505.0px;top:1292.5px;font-size:18.500px;color:#585858;transform:translate(-50%,-50%) rotate(-90deg)">8</span><span class="t" style="left:505.0px;top:1344.8px;font-size:18.500px;color:#585858;transform:translate(-50%,-50%) rotate(-90deg)">9</span><div class="abs" style="left:493px;top:1417px;width:2067px;height:9.5px;background:#f7f7f7;border-top:1.500px solid #b4b4b4"></div><div class="abs" style="left:484px;top:291px;width:9px;height:1136px;background:linear-gradient(90deg,#e4e4e6,#f0f0f0)"></div><div class="abs" style="left:671px;top:384px;width:1760px;height:991.2px;background:#8fc3e8;box-shadow:0 2px 14px rgba(0,0,0,.13),0 0 2.500px rgba(0,0,0,.16)"></div>
<svg style="left:0;top:0" width="0" height="0"><defs>
<linearGradient id="pbase" x1="0" y1="0" x2="0" y2="1"><stop offset=".6" stop-color="#185a65"/><stop offset="1" stop-color="#155660"/></linearGradient>
<filter id="b5" x="-30%" y="-30%" width="160%" height="160%"><feGaussianBlur stdDeviation="5"/></filter><filter id="b6" x="-30%" y="-30%" width="160%" height="160%"><feGaussianBlur stdDeviation="6"/></filter><filter id="b7" x="-30%" y="-30%" width="160%" height="160%"><feGaussianBlur stdDeviation="7"/></filter><filter id="b10" x="-30%" y="-30%" width="160%" height="160%"><feGaussianBlur stdDeviation="10"/></filter><filter id="b12" x="-30%" y="-30%" width="160%" height="160%"><feGaussianBlur stdDeviation="12"/></filter><filter id="b18" x="-30%" y="-30%" width="160%" height="160%"><feGaussianBlur stdDeviation="18"/></filter><filter id="b22" x="-30%" y="-30%" width="160%" height="160%"><feGaussianBlur stdDeviation="22"/></filter><filter id="b25" x="-30%" y="-30%" width="160%" height="160%"><feGaussianBlur stdDeviation="25"/></filter><filter id="b28" x="-30%" y="-30%" width="160%" height="160%"><feGaussianBlur stdDeviation="28"/></filter><filter id="b30" x="-30%" y="-30%" width="160%" height="160%"><feGaussianBlur stdDeviation="30"/></filter><filter id="b35" x="-30%" y="-30%" width="160%" height="160%"><feGaussianBlur stdDeviation="35"/></filter>
<symbol id="paint" viewBox="0 0 851 990" preserveAspectRatio="none" overflow="hidden"><rect x="-5" y="-5" width="861" height="1000" fill="url(#pbase)"/><path d="M-120.0 790.0C-98.0 782.7 -19.0 757.0 12.0 746.0C43.0 735.0 42.5 732.2 66.0 724.0C89.5 715.8 124.0 702.7 153.0 697.0C182.0 691.3 212.0 691.2 240.0 690.0C268.0 688.8 296.3 698.3 321.0 690.0C345.7 681.7 361.5 650.3 388.0 640.0C414.5 629.7 446.5 630.3 480.0 628.0C513.5 625.7 549.0 630.7 589.0 626.0C629.0 621.3 676.3 608.5 720.0 600.0C763.7 591.5 811.0 582.5 851.0 575.0C891.0 567.5 941.8 558.3 960.0 555.0L1100 555.0L1100 -200L-200 -200L-200 790.0Z" fill="#1e676b" filter="url(#b7)"/><path d="M-120.0 770.0C-98.0 764.2 -19.0 744.7 12.0 735.0C43.0 725.3 42.5 720.2 66.0 712.0C89.5 703.8 110.5 691.3 153.0 686.0C195.5 680.7 281.8 688.5 321.0 680.0C360.2 671.5 354.5 650.0 388.0 635.0C421.5 620.0 482.8 612.5 522.0 590.0C561.2 567.5 589.5 523.3 623.0 500.0C656.5 476.7 685.0 463.3 723.0 450.0C761.0 436.7 811.5 428.3 851.0 420.0C890.5 411.7 941.8 403.3 960.0 400.0L1100 400.0L1100 -200L-200 -200L-200 770.0Z" fill="#26716e" filter="url(#b25)"/><path d="M-120.0 745.0C-98.0 740.0 -33.5 727.5 12.0 715.0C57.5 702.5 101.5 679.5 153.0 670.0C204.5 660.5 279.8 668.0 321.0 658.0C362.2 648.0 366.5 627.2 400.0 610.0C433.5 592.8 485.3 578.3 522.0 555.0C558.7 531.7 586.5 494.2 620.0 470.0C653.5 445.8 684.5 425.8 723.0 410.0C761.5 394.2 811.5 385.0 851.0 375.0C890.5 365.0 941.8 354.2 960.0 350.0L1100 350.0L1100 -200L-200 -200L-200 745.0Z" fill="#2d7b71" filter="url(#b25)"/><path d="M-120.0 700.0C-98.0 698.3 -39.2 693.3 12.0 690.0C63.2 686.7 135.5 685.8 187.0 680.0C238.5 674.2 277.2 668.3 321.0 655.0C364.8 641.7 406.8 622.5 450.0 600.0C493.2 577.5 538.3 548.3 580.0 520.0C621.7 491.7 663.3 455.8 700.0 430.0C736.7 404.2 774.8 380.8 800.0 365.0C825.2 349.2 824.3 347.5 851.0 335.0C877.7 322.5 941.8 297.5 960.0 290.0L1100 290.0L1100 -200L-200 -200L-200 700.0Z" fill="#37866e" filter="url(#b35)"/><path d="M-120.0 670.0C-98.0 668.3 -39.2 663.3 12.0 660.0C63.2 656.7 135.5 656.3 187.0 650.0C238.5 643.7 278.8 637.0 321.0 622.0C363.2 607.0 400.2 585.3 440.0 560.0C479.8 534.7 525.0 500.8 560.0 470.0C595.0 439.2 620.8 404.2 650.0 375.0C679.2 345.8 705.0 320.0 735.0 295.0C765.0 270.0 792.5 249.2 830.0 225.0C867.5 200.8 938.3 162.5 960.0 150.0L1100 150.0L1100 -200L-200 -200L-200 670.0Z" fill="#4a9966" filter="url(#b30)"/><path d="M-120.0 655.0C-98.0 651.8 -39.2 641.0 12.0 636.0C63.2 631.0 135.5 632.7 187.0 625.0C238.5 617.3 281.3 607.5 321.0 590.0C360.7 572.5 391.0 548.3 425.0 520.0C459.0 491.7 495.0 453.3 525.0 420.0C555.0 386.7 579.2 350.8 605.0 320.0C630.8 289.2 651.7 263.3 680.0 235.0C708.3 206.7 746.5 172.5 775.0 150.0C803.5 127.5 820.2 115.0 851.0 100.0C881.8 85.0 941.8 66.7 960.0 60.0L1100 60.0L1100 -200L-200 -200L-200 655.0Z" fill="#5daa5f" filter="url(#b18)"/><path d="M-120.0 640.0C-98.0 635.8 -24.7 622.2 12.0 615.0C48.7 607.8 70.8 601.2 100.0 597.0C129.2 592.8 158.7 594.8 187.0 590.0C215.3 585.2 245.3 576.3 270.0 568.0C294.7 559.7 314.2 551.8 335.0 540.0C355.8 528.2 377.5 513.7 395.0 497.0C412.5 480.3 423.3 461.2 440.0 440.0C456.7 418.8 478.3 391.3 495.0 370.0C511.7 348.7 522.5 332.8 540.0 312.0C557.5 291.2 580.8 270.3 600.0 245.0C619.2 219.7 636.3 190.8 655.0 160.0C673.7 129.2 697.0 90.0 712.0 60.0C727.0 30.0 739.5 -6.7 745.0 -20.0L745.0 -200L-200 -200L-200 640.0Z" fill="#66b45f" filter="url(#b10)"/><path d="M-120.0 625.0C-98.0 620.2 -22.3 604.2 12.0 596.0C46.3 587.8 56.8 581.7 86.0 576.0C115.2 570.3 159.0 567.8 187.0 562.0C215.0 556.2 235.0 547.8 254.0 541.0C273.0 534.2 283.2 532.2 301.0 521.0C318.8 509.8 344.3 490.8 361.0 474.0C377.7 457.2 385.3 440.3 401.0 420.0C416.7 399.7 439.3 372.3 455.0 352.0C470.7 331.7 478.2 318.2 495.0 298.0C511.8 277.8 537.0 256.8 556.0 231.0C575.0 205.2 592.3 172.3 609.0 143.0C625.7 113.7 644.2 82.2 656.0 55.0C667.8 27.8 676.0 -7.5 680.0 -20.0L680.0 -200L-200 -200L-200 625.0Z" fill="#8fc673" filter="url(#b5)"/><path d="M-120.0 612.0C-98.0 607.3 -22.3 592.2 12.0 584.0C46.3 575.8 56.8 569.0 86.0 563.0C115.2 557.0 159.0 554.0 187.0 548.0C215.0 542.0 235.0 534.2 254.0 527.0C273.0 519.8 284.2 515.8 301.0 505.0C317.8 494.2 339.7 477.8 355.0 462.0C370.3 446.2 378.0 429.5 393.0 410.0C408.0 390.5 429.7 365.0 445.0 345.0C460.3 325.0 468.3 310.5 485.0 290.0C501.7 269.5 526.3 247.7 545.0 222.0C563.7 196.3 580.8 164.7 597.0 136.0C613.2 107.3 630.8 76.0 642.0 50.0C653.2 24.0 660.3 -8.3 664.0 -20.0L664.0 -200L-200 -200L-200 612.0Z" fill="#afd184" filter="url(#b7)"/><path d="M-120.0 590.0C-98.0 585.3 -23.0 570.3 12.0 562.0C47.0 553.7 60.8 546.0 90.0 540.0C119.2 534.0 159.7 531.8 187.0 526.0C214.3 520.2 235.2 512.3 254.0 505.0C272.8 497.7 284.8 492.8 300.0 482.0C315.2 471.2 331.3 455.0 345.0 440.0C358.7 425.0 367.5 410.3 382.0 392.0C396.5 373.7 417.0 349.3 432.0 330.0C447.0 310.7 455.7 296.3 472.0 276.0C488.3 255.7 512.0 233.2 530.0 208.0C548.0 182.8 564.7 152.2 580.0 125.0C595.3 97.8 611.7 69.2 622.0 45.0C632.3 20.8 638.7 -9.2 642.0 -20.0L642.0 -200L-200 -200L-200 590.0Z" fill="#cbd597" filter="url(#b12)"/><path d="M-120.0 500.0C-98.0 495.0 -24.7 473.7 12.0 470.0C48.7 466.3 73.7 478.0 100.0 478.0C126.3 478.0 145.0 476.3 170.0 470.0C195.0 463.7 226.7 453.3 250.0 440.0C273.3 426.7 291.7 410.0 310.0 390.0C328.3 370.0 343.3 343.3 360.0 320.0C376.7 296.7 393.3 275.0 410.0 250.0C426.7 225.0 445.0 196.7 460.0 170.0C475.0 143.3 488.3 121.7 500.0 90.0C511.7 58.3 525.0 -1.7 530.0 -20.0L530.0 -200L-200 -200L-200 500.0Z" fill="#d6c79a" filter="url(#b25)"/><path d="M-120.0 420.0C-98.0 416.7 -21.3 399.2 12.0 400.0C45.3 400.8 55.3 420.0 80.0 425.0C104.7 430.0 135.0 434.2 160.0 430.0C185.0 425.8 208.3 415.0 230.0 400.0C251.7 385.0 271.7 363.3 290.0 340.0C308.3 316.7 323.3 286.7 340.0 260.0C356.7 233.3 375.0 206.7 390.0 180.0C405.0 153.3 418.3 133.3 430.0 100.0C441.7 66.7 455.0 0.0 460.0 -20.0L460.0 -200L-200 -200L-200 420.0Z" fill="#dfb29c" filter="url(#b30)"/><path d="M-120.0 300.0C-100.0 293.3 -26.7 261.7 0.0 260.0C26.7 258.3 26.7 270.0 40.0 290.0C53.3 310.0 65.8 355.0 80.0 380.0C94.2 405.0 106.7 431.7 125.0 440.0C143.3 448.3 168.3 445.0 190.0 430.0C211.7 415.0 235.8 378.3 255.0 350.0C274.2 321.7 295.0 290.0 305.0 260.0C315.0 230.0 312.2 200.0 315.0 170.0C317.8 140.0 318.7 111.7 322.0 80.0C325.3 48.3 332.8 -3.3 335.0 -20.0L335.0 -200L-200 -200L-200 300.0Z" fill="#e7a097" filter="url(#b28)"/><path d="M-120.0 190.0C-100.0 186.7 -26.7 168.3 0.0 170.0C26.7 171.7 25.0 178.3 40.0 200.0C55.0 221.7 74.2 266.7 90.0 300.0C105.8 333.3 119.2 384.2 135.0 400.0C150.8 415.8 167.5 408.3 185.0 395.0C202.5 381.7 224.2 345.8 240.0 320.0C255.8 294.2 272.5 268.3 280.0 240.0C287.5 211.7 284.7 180.0 285.0 150.0C285.3 120.0 281.2 88.3 282.0 60.0C282.8 31.7 288.7 -6.7 290.0 -20.0L290.0 -200L-200 -200L-200 190.0Z" fill="#e99c95" filter="url(#b22)"/></symbol></defs></svg><svg style="left:1575px;top:384px;overflow:hidden" width="856" height="991.200"><use href="#paint" x="0" y="0" width="856" height="991.200"/></svg><svg style="left:1570px;top:384px;" width="20" height="991.2" viewBox="0 0 20 991.2"><path d="M0 0H9.500C10 200 13 420 16.500 640C17.500 800 17 900 17 991.200H0Z" fill="#8fc3e8"/></svg><span class="t" style="left:898.3px;top:655.2px;font-size:100px;color:#1268b4;font-family:'DejaVu Sans Mono',monospace;font-weight:700;">EL CICLO</span><span class="t" style="left:898.3px;top:775.2px;font-size:100px;color:#1268b4;font-family:'DejaVu Sans Mono',monospace;font-weight:700;">DEL AGUA</span><span class="t" style="left:856.0px;top:947.5px;font-size:38px;color:#1268b4;font-family:'DejaVu Serif',serif;font-weight:700;letter-spacing:-0.46px;">2º EDUCACIÓN PRIMARIA</span><span class="t" style="left:917.4px;top:1013.3px;font-size:38px;color:#1268b4;font-family:'DejaVu Serif',serif;font-weight:700;letter-spacing:-0.72px;">CIENCIAS SOCIALES</span><span class="t" style="left:914.0px;top:1079.0px;font-size:38px;color:#1268b4;font-family:'DejaVu Serif',serif;font-weight:700;letter-spacing:0.60px;">Mónica Ávila Rivallo</span><svg style="left:1208px;top:1114px;" width="160" height="5" viewBox="0 0 160 5"><path d="M0 3L3.2 0L6.4 3L9.6 0L12.8 3L16 0L19.2 3L22.4 0L25.6 3L28.8 0L32 3L35.2 0L38.4 3L41.6 0L44.8 3L48 0L51.2 3L54.4 0L57.6 3L60.8 0L64 3L67.2 0L70.4 3L73.6 0L76.8 3L80 0L83.2 3L86.4 0L89.6 3L92.8 0L96 3L99.2 0L102.4 3L105.6 0L108.8 3L112 0L115.2 3L118.4 0L121.6 3L124.8 0L128 3L131.2 0L134.4 3L137.6 0L140.8 3L144 0L147.2 3L150.4 0L153.6 3L156.8 0" fill="none" stroke="#d0352e" stroke-width="1.300"/></svg>
<div id="panel" class="abs"></div><div class="abs" style="left:484px;top:291px;width:9px;height:1136px;background:linear-gradient(90deg,#e4e4e6,#f2f2f2);border-right:1.500px solid #b5b5b5"></div><span class="t" style="left:20.3px;top:314.0px;font-size:26px;color:#3a3a3a;">1</span><span class="t" style="left:20.3px;top:566.2px;font-size:26px;color:#3a3a3a;">2</span><span class="t" style="left:20.3px;top:818.9px;font-size:26px;color:#3a3a3a;">3</span><span class="t" style="left:20.3px;top:1070.3px;font-size:26px;color:#3a3a3a;">4</span><span class="t" style="left:20.3px;top:1322.5px;font-size:26px;color:#3a3a3a;">5</span><svg style="left:10px;top:361px;" width="36" height="27" viewBox="0 0 36 27"><path d="M22.500 1.500l3.200 7.600 8.200.700-6.200 5.400 1.900 8-7.100-4.300-7.100 4.300 1.900-8-6.200-5.400 8.200-.700z" fill="#333"/><g stroke="#333" stroke-width="1.800" stroke-linecap="round"><path d="M2.500 4.500l5.500 2M1.500 12.500h6M2.500 21.500l5.500-2.500"/></g></svg><div class="abs" style="left:56.2px;top:304px;width:395.2px;height:227.3px;border-radius:11px;background:#b5352b"></div><div class="abs" style="left:61.7px;top:309.5px;width:383.8px;height:216.3px;border-radius:7px;background:#e3d2c9"></div><div class="abs" style="left:63px;top:310.7px;width:381.2px;height:213.9px;overflow:hidden;border-radius:5px"><div class="abs" style="left:0px;top:0px;width:381.2px;height:213.9px;background:#8fc3e8"></div><svg style="left:195.9px;top:0;overflow:hidden" width="185.3" height="213.9"><use href="#paint" x="0" y="0" width="185.3" height="213.9"/></svg><svg style="left:194.8px;top:0px;" width="5" height="213.9" viewBox="0 0 5 213.9"><path d="M0 0H2.100L3.700 140V213.9H0Z" fill="#8fc3e8"/></svg><span class="t" style="left:49.4px;top:58.9px;font-size:21.6517px;color:#1268b4;font-family:'DejaVu Sans Mono',monospace;font-weight:700;">EL CICLO</span><span class="t" style="left:49.4px;top:84.9px;font-size:21.6517px;color:#1268b4;font-family:'DejaVu Sans Mono',monospace;font-weight:700;">DEL AGUA</span><span class="t" style="left:40.2px;top:121.9px;font-size:8.22765px;color:#1268b4;font-family:'DejaVu Serif',serif;font-weight:700;letter-spacing:-0.09px;">2º EDUCACIÓN PRIMARIA</span><span class="t" style="left:53.5px;top:136.2px;font-size:8.22765px;color:#1268b4;font-family:'DejaVu Serif',serif;font-weight:700;letter-spacing:-0.15px;">CIENCIAS SOCIALES</span><span class="t" style="left:52.8px;top:150.4px;font-size:8.22765px;color:#1268b4;font-family:'DejaVu Serif',serif;font-weight:700;letter-spacing:0.13px;">Mónica Ávila Rivallo</span></div><div class="abs" style="left:63px;top:562.9px;width:381.2px;height:213.9px;overflow:hidden;border-radius:6px;box-shadow:0 0 0 1.200px #cfcfcf;"><div class="abs" style="left:0px;top:0px;width:381.2px;height:132.6px;background:#daa692"></div><div class="abs" style="left:0px;top:132.6px;width:381.2px;height:90px;background:#d5ecf3"></div><svg style="left:0px;top:0px;overflow:hidden" width="381.2" height="132.6" viewBox="0 0 381.2 132.6"><g fill="rgba(255,255,255,.22)" stroke="#f6ebe5" stroke-width="1.500" opacity=".92"><g transform="translate(237.5 10.3) rotate(286)"><path d="M0 0C11.7 -7.8 27.3 -7.8 39.0 0C27.3 7.8 11.7 7.8 0 0M0 0H39.0"/></g><g transform="translate(282.0 14.3) rotate(10)"><path d="M0 0C9.1 -6.1 21.3 -6.1 30.4 0C21.3 6.1 9.1 6.1 0 0M0 0H30.4"/></g><g transform="translate(359.6 8.3) rotate(324)"><path d="M0 0C7.2 -4.8 16.8 -4.8 24.0 0C16.8 4.8 7.2 4.8 0 0M0 0H24.0"/></g><g transform="translate(178.8 -0.6) rotate(196)"><path d="M0 0C9.7 -6.5 22.6 -6.5 32.3 0C22.6 6.5 9.7 6.5 0 0M0 0H32.3"/></g><g transform="translate(5.0 -1.2) rotate(101)"><path d="M0 0C11.5 -7.7 26.9 -7.7 38.5 0C26.9 7.7 11.5 7.7 0 0M0 0H38.5"/></g><g transform="translate(291.9 -2.5) rotate(287)"><path d="M0 0C7.3 -4.9 17.1 -4.9 24.5 0C17.1 4.9 7.3 4.9 0 0M0 0H24.5"/></g><g transform="translate(235.4 -3.2) rotate(1)"><path d="M0 0C11.3 -7.5 26.4 -7.5 37.7 0C26.4 7.5 11.3 7.5 0 0M0 0H37.7"/></g><g transform="translate(79.8 -1.3) rotate(354)"><path d="M0 0C11.3 -7.5 26.4 -7.5 37.7 0C26.4 7.5 11.3 7.5 0 0M0 0H37.7"/></g><g transform="translate(110.3 15.2) rotate(194)"><path d="M0 0C10.3 -6.8 23.9 -6.8 34.2 0C23.9 6.8 10.3 6.8 0 0M0 0H34.2"/></g><g transform="translate(78.1 14.7) rotate(249)"><path d="M0 0C11.8 -7.9 27.6 -7.9 39.4 0C27.6 7.9 11.8 7.9 0 0M0 0H39.4"/></g><g transform="translate(340.7 0.6) rotate(130)"><path d="M0 0C7.5 -5.0 17.5 -5.0 25.0 0C17.5 5.0 7.5 5.0 0 0M0 0H25.0"/></g><g transform="translate(55.5 -4.6) rotate(108)"><path d="M0 0C9.9 -6.6 23.0 -6.6 32.9 0C23.0 6.6 9.9 6.6 0 0M0 0H32.9"/></g><g transform="translate(1.3 8.9) rotate(122)"><path d="M0 0C8.3 -5.5 19.3 -5.5 27.6 0C19.3 5.5 8.3 5.5 0 0M0 0H27.6"/></g><g transform="translate(312.0 4.6) rotate(114)"><path d="M0 0C9.2 -6.1 21.5 -6.1 30.7 0C21.5 6.1 9.2 6.1 0 0M0 0H30.7"/></g><g transform="translate(8.8 7.6) rotate(351)"><path d="M0 0C6.7 -4.5 15.7 -4.5 22.4 0C15.7 4.5 6.7 4.5 0 0M0 0H22.4"/></g><g transform="translate(9.7 112.0) rotate(7)"><path d="M0 0C10.9 -7.2 25.3 -7.2 36.2 0C25.3 7.2 10.9 7.2 0 0M0 0H36.2"/></g><g transform="translate(1.7 76.7) rotate(3)"><path d="M0 0C6.9 -4.6 16.0 -4.6 22.8 0C16.0 4.6 6.9 4.6 0 0M0 0H22.8"/></g><g transform="translate(-2.2 126.7) rotate(71)"><path d="M0 0C10.7 -7.1 24.9 -7.1 35.6 0C24.9 7.1 10.7 7.1 0 0M0 0H35.6"/></g><g transform="translate(13.5 124.9) rotate(124)"><path d="M0 0C8.5 -5.7 19.9 -5.7 28.4 0C19.9 5.7 8.5 5.7 0 0M0 0H28.4"/></g><g transform="translate(5.0 102.8) rotate(39)"><path d="M0 0C10.6 -7.1 24.8 -7.1 35.5 0C24.8 7.1 10.6 7.1 0 0M0 0H35.5"/></g><g transform="translate(10.7 114.0) rotate(13)"><path d="M0 0C11.7 -7.8 27.3 -7.8 39.0 0C27.3 7.8 11.7 7.8 0 0M0 0H39.0"/></g><g transform="translate(-4.1 45.2) rotate(220)"><path d="M0 0C11.6 -7.7 27.0 -7.7 38.5 0C27.0 7.7 11.6 7.7 0 0M0 0H38.5"/></g><g transform="translate(373.3 122.5) rotate(196)"><path d="M0 0C8.3 -5.5 19.3 -5.5 27.6 0C19.3 5.5 8.3 5.5 0 0M0 0H27.6"/></g><g transform="translate(372.9 23.5) rotate(28)"><path d="M0 0C7.4 -4.9 17.3 -4.9 24.7 0C17.3 4.9 7.4 4.9 0 0M0 0H24.7"/></g><g transform="translate(380.7 132.2) rotate(58)"><path d="M0 0C6.9 -4.6 16.0 -4.6 22.9 0C16.0 4.6 6.9 4.6 0 0M0 0H22.9"/></g><g transform="translate(386.9 70.7) rotate(146)"><path d="M0 0C7.9 -5.3 18.4 -5.3 26.3 0C18.4 5.3 7.9 5.3 0 0M0 0H26.3"/></g><g transform="translate(378.7 109.6) rotate(164)"><path d="M0 0C8.9 -5.9 20.7 -5.9 29.6 0C20.7 5.9 8.9 5.9 0 0M0 0H29.6"/></g><g transform="translate(367.4 121.5) rotate(12)"><path d="M0 0C9.3 -6.2 21.6 -6.2 30.9 0C21.6 6.2 9.3 6.2 0 0M0 0H30.9"/></g><g transform="translate(383.8 17.3) rotate(263)"><path d="M0 0C11.7 -7.8 27.4 -7.8 39.1 0C27.4 7.8 11.7 7.8 0 0M0 0H39.1"/></g><g transform="translate(379.4 104.5) rotate(38)"><path d="M0 0C8.9 -6.0 20.9 -6.0 29.8 0C20.9 6.0 8.9 6.0 0 0M0 0H29.8"/></g></g></svg><div class="abs" style="left:12.7px;top:12.8px;width:356.6px;height:187.3px;background:#fff"></div><span class="t" style="left:37.8px;top:32.2px;font-size:17.5px;color:#111;font-family:'Liberation Serif',serif;font-weight:700;letter-spacing:-1.13px;">INTRODUCCIÓN</span><div class="abs" style="left:22px;top:67.2px;width:288px;height:34.5px;background:#8cc541;border-radius:2.500px"></div><div class="abs" style="left:47px;top:108.4px;width:289px;height:34.4px;background:#45d463;border-radius:2.500px"></div><div class="abs" style="left:73.2px;top:150.4px;width:287.8px;height:33.3px;background:#3aacc9;border-radius:2.500px"></div><span class="t" style="left:25.0px;top:72.7px;font-size:9.7px;color:#fff;font-weight:700;letter-spacing:0.11px;">Chicos, hoy vamos a conocer al pulpo, Don Pulpín,</span><span class="t" style="left:25.0px;top:85.7px;font-size:9.7px;color:#fff;font-weight:700;letter-spacing:0.12px;">un pulpo muy gracioso pero a veces se pone triste.</span><span class="t" style="left:50.5px;top:120.7px;font-size:9.7px;color:#fff;font-weight:700;letter-spacing:0.13px;">¿Queréis saber por qué?</span><span class="t" style="left:76.3px;top:162.2px;font-size:9.7px;color:#fff;font-weight:700;letter-spacing:0.04px;">¡EMPECEMOS LA AVENTURA!</span><svg style="left:289.3px;top:93.3px;" width="20.5" height="24" viewBox="0 0 20.5 24"><path d="M5.200 0h10v11h5.300L10.200 24 0 11h5.200z" fill="#d3e9c9" opacity=".92"/></svg><svg style="left:315.5px;top:134.3px;" width="20.5" height="24" viewBox="0 0 20.5 24"><path d="M5.200 0h10v11h5.300L10.200 24 0 11h5.200z" fill="#c9e5ee" opacity=".92"/></svg></div><div class="abs" style="left:63px;top:815.6px;width:381.2px;height:213.9px;overflow:hidden;border-radius:6px;box-shadow:0 0 0 1.200px #cfcfcf;box-shadow:none;"><div class="abs" style="left:0px;top:0px;width:381.2px;height:213.9px;background:radial-gradient(ellipse 95% 120% at 50% 45%,#15283a 0%,#0e1c2a 55%,#060c14 100%)"></div><svg style="left:0px;top:0px;overflow:hidden" width="381.2" height="213.9" viewBox="0 0 381.2 213.9"><defs><filter id="b2"><feGaussianBlur stdDeviation="1.300"/></filter><linearGradient id="t3f" x1="0" y1="0" x2="0" y2="1"><stop offset="0" stop-color="#fff"/><stop offset=".5" stop-color="#fff" stop-opacity=".8"/><stop offset="1" stop-color="#fff" stop-opacity="0"/></linearGradient><mask id="t3m"><rect x="0" y="0" width="381.2" height="96" fill="url(#t3f)"/></mask></defs><g filter="url(#b2)" mask="url(#t3m)"><path d="M128.0 -5C131.0 25 131.0 45 124.0 62C119.0 76 104.0 84 78.0 86" fill="none" stroke="#47584f" stroke-width="9.500" opacity="0.40"/><path d="M143.8 -5C146.8 25 146.8 45 139.8 62C134.8 76 119.8 84 93.8 86" fill="none" stroke="#47584f" stroke-width="9.500" opacity="0.40"/><path d="M159.6 -5C162.6 25 162.6 45 155.6 62C150.6 76 135.6 84 109.6 86" fill="none" stroke="#47584f" stroke-width="9.500" opacity="0.85"/><path d="M175.4 -5C178.4 25 178.4 45 171.4 62C166.4 76 151.4 84 125.4 86" fill="none" stroke="#47584f" stroke-width="9.500" opacity="0.85"/><path d="M191.2 -5C194.2 25 194.2 45 187.2 62C182.2 76 167.2 84 141.2 86" fill="none" stroke="#47584f" stroke-width="9.500" opacity="0.85"/><path d="M207.0 -5C210.0 25 210.0 45 203.0 62C198.0 76 183.0 84 157.0 86" fill="none" stroke="#47584f" stroke-width="9.500" opacity="0.85"/><path d="M222.8 -5C225.8 25 225.8 45 218.8 62C213.8 76 198.8 84 172.8 86" fill="none" stroke="#47584f" stroke-width="9.500" opacity="0.85"/><path d="M238.6 -5C241.6 25 241.6 45 234.6 62C229.6 76 214.6 84 188.6 86" fill="none" stroke="#47584f" stroke-width="9.500" opacity="0.85"/><path d="M254.4 -5C257.4 25 257.4 45 250.4 62C245.4 76 230.4 84 204.4 86" fill="none" stroke="#47584f" stroke-width="9.500" opacity="0.85"/><path d="M270.2 -5C273.2 25 273.2 45 266.2 62C261.2 76 246.2 84 220.2 86" fill="none" stroke="#47584f" stroke-width="9.500" opacity="0.85"/><path d="M286.0 -5C289.0 25 289.0 45 282.0 62C277.0 76 262.0 84 236.0 86" fill="none" stroke="#47584f" stroke-width="9.500" opacity="0.85"/><path d="M301.8 -5C304.8 25 304.8 45 297.8 62C292.8 76 277.8 84 251.8 86" fill="none" stroke="#47584f" stroke-width="9.500" opacity="0.85"/><path d="M317.6 -5C320.6 25 320.6 45 313.6 62C308.6 76 293.6 84 267.6 86" fill="none" stroke="#47584f" stroke-width="9.500" opacity="0.85"/><path d="M333.4 -5C336.4 25 336.4 45 329.4 62C324.4 76 309.4 84 283.4 86" fill="none" stroke="#47584f" stroke-width="9.500" opacity="0.85"/><path d="M349.2 -5C352.2 25 352.2 45 345.2 62C340.2 76 325.2 84 299.2 86" fill="none" stroke="#47584f" stroke-width="9.500" opacity="0.85"/><path d="M365.0 -5C368.0 25 368.0 45 361.0 62C356.0 76 341.0 84 315.0 86" fill="none" stroke="#47584f" stroke-width="9.500" opacity="0.85"/><path d="M380.8 -5C383.8 25 383.8 45 376.8 62C371.8 76 356.8 84 330.8 86" fill="none" stroke="#47584f" stroke-width="9.500" opacity="0.85"/></g></svg><span class="t" style="left:28.0px;top:20.5px;font-size:20px;color:#fff;font-family:'Liberation Serif',serif;font-weight:700;letter-spacing:-1.76px;">OBJETIVOS</span><div class="abs" style="left:25px;top:57px;width:104.2px;height:62px;background:linear-gradient(#b8492a,#a93b22)"></div><span class="t" style="left:36.0px;top:63.3px;font-size:5.8px;color:#fbe9dc;font-weight:700;">•Conocer las características y</span><span class="t" style="left:28.8px;top:70.8px;font-size:5.8px;color:#fbe9dc;font-weight:700;">funciones del agua como elemento</span><span class="t" style="left:33.0px;top:78.3px;font-size:5.8px;color:#fbe9dc;font-weight:700;">fundamental que forma parte de</span><span class="t" style="left:34.6px;top:85.8px;font-size:5.8px;color:#fbe9dc;font-weight:700;">nuestro entorno y nuestra vida</span><span class="t" style="left:45.2px;top:93.3px;font-size:5.8px;color:#fbe9dc;font-weight:700;">cotidiana a través de la</span><span class="t" style="left:33.0px;top:100.8px;font-size:5.8px;color:#fbe9dc;font-weight:700;">observación, experimentación y</span><span class="t" style="left:57.6px;top:108.3px;font-size:5.8px;color:#fbe9dc;font-weight:700;">manipulación.</span><div class="abs" style="left:139.2px;top:57px;width:104px;height:62px;background:linear-gradient(#bd4f29,#b04423)"></div><span class="t" style="left:145.9px;top:74.6px;font-size:5.8px;color:#fbe9dc;font-weight:700;">•Valorar y analizar la importancia</span><span class="t" style="left:143.4px;top:82.1px;font-size:5.8px;color:#fbe9dc;font-weight:700;">del agua como recurso limitado en</span><span class="t" style="left:149.2px;top:89.6px;font-size:5.8px;color:#fbe9dc;font-weight:700;">nuestro planeta y fundamental</span><span class="t" style="left:174.4px;top:97.1px;font-size:5.8px;color:#fbe9dc;font-weight:700;">para la vida.</span><div class="abs" style="left:253.4px;top:57px;width:103.8px;height:62px;background:linear-gradient(#c75a2a,#bd5125)"></div><span class="t" style="left:257.1px;top:63.3px;font-size:5.8px;color:#fbe9dc;font-weight:700;">•Fomentar y generar en los niños y</span><span class="t" style="left:263.9px;top:70.8px;font-size:5.8px;color:#fbe9dc;font-weight:700;">las niñas hábitos de consumo</span><span class="t" style="left:261.5px;top:78.3px;font-size:5.8px;color:#fbe9dc;font-weight:700;">responsable del agua, así como</span><span class="t" style="left:261.5px;top:85.8px;font-size:5.8px;color:#fbe9dc;font-weight:700;">acciones que respeten el medio</span><span class="t" style="left:272.9px;top:93.3px;font-size:5.8px;color:#fbe9dc;font-weight:700;">mediante el reciclaje, la</span><span class="t" style="left:268.2px;top:100.8px;font-size:5.8px;color:#fbe9dc;font-weight:700;">reutilización y la expresión</span><span class="t" style="left:293.4px;top:108.3px;font-size:5.8px;color:#fbe9dc;font-weight:700;">artística.</span><div class="abs" style="left:25px;top:129.5px;width:104.2px;height:62px;background:linear-gradient(#e8722f,#e0692a)"></div><span class="t" style="left:30.5px;top:150.8px;font-size:5.8px;color:#fbe9dc;font-weight:700;">•Trabajar de forma cooperativa en</span><span class="t" style="left:30.1px;top:158.3px;font-size:5.8px;color:#fbe9dc;font-weight:700;">gran y pequeño grupo respetando</span><span class="t" style="left:51.6px;top:165.8px;font-size:5.8px;color:#fbe9dc;font-weight:700;">a los compañeros.</span><div class="abs" style="left:139.2px;top:129.5px;width:104px;height:62px;background:linear-gradient(#ef8a2f,#e87f2a)"></div><span class="t" style="left:150.4px;top:150.8px;font-size:5.8px;color:#fbe9dc;font-weight:700;">•Utilizar el debate y el sentido</span><span class="t" style="left:143.0px;top:158.3px;font-size:5.8px;color:#fbe9dc;font-weight:700;">crítico para resolver problemáticas</span><span class="t" style="left:164.6px;top:165.8px;font-size:5.8px;color:#fbe9dc;font-weight:700;">de diferente índole.</span><div class="abs" style="left:253.4px;top:129.5px;width:103.8px;height:62px;background:linear-gradient(#f2a232,#ee962c)"></div><span class="t" style="left:264.0px;top:143.3px;font-size:5.8px;color:#fbe9dc;font-weight:700;">•Mostrar y generar conciencia</span><span class="t" style="left:269.5px;top:150.8px;font-size:5.8px;color:#fbe9dc;font-weight:700;">sobre la importancia de la</span><span class="t" style="left:262.3px;top:158.3px;font-size:5.8px;color:#fbe9dc;font-weight:700;">presencia y el desarrollo de las</span><span class="t" style="left:264.5px;top:165.8px;font-size:5.8px;color:#fbe9dc;font-weight:700;">ciencias experimentales en la</span><span class="t" style="left:290.2px;top:173.3px;font-size:5.8px;color:#fbe9dc;font-weight:700;">educación.</span></div><div class="abs" style="left:63px;top:1067px;width:381.2px;height:213.9px;overflow:hidden;border-radius:6px;box-shadow:0 0 0 1.200px #cfcfcf;"><div class="abs" style="left:0px;top:0px;width:381.2px;height:213.9px;background:#fff"></div><div class="abs" style="left:-125px;top:-22.3px;width:254px;height:254px;border-radius:50%;background:#8cc63f"></div><span class="t" style="left:23.7px;top:99.8px;font-size:11.3px;color:#f4f9e4;font-family:'Liberation Serif',serif;font-weight:700;letter-spacing:-0.18px;">ORGANIZACIÓN</span><span class="t" style="left:133.0px;top:22.2px;font-size:14.2px;color:#2a6cb0;letter-spacing:0.15px;">1º.- Lectura del cuento de manera</span><span class="t" style="left:133.0px;top:40.0px;font-size:14.2px;color:#2a6cb0;letter-spacing:0.08px;">colectiva. Reconocer el orden de las</span><span class="t" style="left:133.0px;top:57.3px;font-size:14.2px;color:#2a6cb0;letter-spacing:-0.06px;">escenas y colorearlas.</span><span class="t" style="left:133.0px;top:78.3px;font-size:14.2px;color:#2a6cb0;letter-spacing:0.18px;">2º.- Búsqueda de información con</span><span class="t" style="left:133.0px;top:96.0px;font-size:14.2px;color:#2a6cb0;letter-spacing:0.09px;">las tablets, de manera guiada .</span><span class="t" style="left:133.0px;top:113.3px;font-size:14.2px;color:#2a6cb0;letter-spacing:0.05px;">Visionado de vídeos.</span><span class="t" style="left:133.0px;top:135.0px;font-size:14.2px;color:#2a6cb0;letter-spacing:0.03px;">3º.-Taller de "Cómo se ensucian las</span><span class="t" style="left:133.0px;top:152.2px;font-size:14.2px;color:#2a6cb0;letter-spacing:0.04px;">aguas de nuestro Planeta. Debate y</span><span class="t" style="left:133.0px;top:169.4px;font-size:14.2px;color:#2a6cb0;letter-spacing:0.27px;">reflexión.</span><svg style="left:290px;top:135px;" width="90" height="80" viewBox="0 0 90 80"><path d="M74.500 9C78 40 52 72 8 69.500" fill="none" stroke="#1f5f9e" stroke-width="3.600" stroke-dasharray="14 13" stroke-linecap="round"/></svg></div><div class="abs" style="left:63px;top:1319.2px;width:381.2px;height:107.3px;overflow:hidden;border-radius:6px;box-shadow:0 0 0 1.200px #cfcfcf;border-radius:6px 6px 0 0;"><div class="abs" style="left:0px;top:0px;width:381.2px;height:213.9px;background:#daa692"></div><svg style="left:0px;top:0px;overflow:hidden" width="381.2" height="213.9" viewBox="0 0 381.2 213.9"><g fill="rgba(255,255,255,.22)" stroke="#f6ebe5" stroke-width="1.500" opacity=".92"><g transform="translate(172.4 6.3) rotate(333)"><path d="M0 0C9.1 -6.1 21.3 -6.1 30.4 0C21.3 6.1 9.1 6.1 0 0M0 0H30.4"/></g><g transform="translate(193.6 6.9) rotate(66)"><path d="M0 0C9.4 -6.2 21.9 -6.2 31.2 0C21.9 6.2 9.4 6.2 0 0M0 0H31.2"/></g><g transform="translate(240.1 11.4) rotate(34)"><path d="M0 0C8.2 -5.5 19.2 -5.5 27.5 0C19.2 5.5 8.2 5.5 0 0M0 0H27.5"/></g><g transform="translate(34.6 11.8) rotate(250)"><path d="M0 0C6.8 -4.6 15.9 -4.6 22.8 0C15.9 4.6 6.8 4.6 0 0M0 0H22.8"/></g><g transform="translate(374.4 15.2) rotate(235)"><path d="M0 0C9.9 -6.6 23.2 -6.6 33.1 0C23.2 6.6 9.9 6.6 0 0M0 0H33.1"/></g><g transform="translate(60.0 -5.7) rotate(190)"><path d="M0 0C6.9 -4.6 16.2 -4.6 23.1 0C16.2 4.6 6.9 4.6 0 0M0 0H23.1"/></g><g transform="translate(72.5 -0.7) rotate(11)"><path d="M0 0C9.1 -6.1 21.2 -6.1 30.4 0C21.2 6.1 9.1 6.1 0 0M0 0H30.4"/></g><g transform="translate(167.9 12.5) rotate(187)"><path d="M0 0C10.1 -6.7 23.5 -6.7 33.5 0C23.5 6.7 10.1 6.7 0 0M0 0H33.5"/></g><g transform="translate(190.5 8.6) rotate(165)"><path d="M0 0C8.1 -5.4 18.9 -5.4 27.0 0C18.9 5.4 8.1 5.4 0 0M0 0H27.0"/></g><g transform="translate(380.3 15.9) rotate(302)"><path d="M0 0C10.4 -6.9 24.3 -6.9 34.7 0C24.3 6.9 10.4 6.9 0 0M0 0H34.7"/></g><g transform="translate(120.2 -0.9) rotate(104)"><path d="M0 0C7.0 -4.7 16.3 -4.7 23.3 0C16.3 4.7 7.0 4.7 0 0M0 0H23.3"/></g><g transform="translate(292.1 2.8) rotate(305)"><path d="M0 0C8.7 -5.8 20.3 -5.8 29.0 0C20.3 5.8 8.7 5.8 0 0M0 0H29.0"/></g><g transform="translate(365.2 12.6) rotate(0)"><path d="M0 0C7.7 -5.2 18.0 -5.2 25.8 0C18.0 5.2 7.7 5.2 0 0M0 0H25.8"/></g><g transform="translate(347.0 4.3) rotate(353)"><path d="M0 0C8.7 -5.8 20.4 -5.8 29.2 0C20.4 5.8 8.7 5.8 0 0M0 0H29.2"/></g><g transform="translate(-4.5 134.6) rotate(280)"><path d="M0 0C8.1 -5.4 18.8 -5.4 26.9 0C18.8 5.4 8.1 5.4 0 0M0 0H26.9"/></g><g transform="translate(-4.2 71.1) rotate(347)"><path d="M0 0C10.7 -7.1 25.0 -7.1 35.6 0C25.0 7.1 10.7 7.1 0 0M0 0H35.6"/></g><g transform="translate(-3.5 52.7) rotate(36)"><path d="M0 0C6.9 -4.6 16.2 -4.6 23.1 0C16.2 4.6 6.9 4.6 0 0M0 0H23.1"/></g><g transform="translate(10.7 38.0) rotate(201)"><path d="M0 0C9.0 -6.0 21.0 -6.0 30.1 0C21.0 6.0 9.0 6.0 0 0M0 0H30.1"/></g><g transform="translate(-2.0 156.6) rotate(47)"><path d="M0 0C10.1 -6.7 23.5 -6.7 33.6 0C23.5 6.7 10.1 6.7 0 0M0 0H33.6"/></g><g transform="translate(-3.6 90.0) rotate(77)"><path d="M0 0C8.1 -5.4 18.8 -5.4 26.9 0C18.8 5.4 8.1 5.4 0 0M0 0H26.9"/></g><g transform="translate(14.4 171.8) rotate(109)"><path d="M0 0C11.4 -7.6 26.5 -7.6 37.9 0C26.5 7.6 11.4 7.6 0 0M0 0H37.9"/></g><g transform="translate(-1.6 84.3) rotate(308)"><path d="M0 0C10.1 -6.7 23.5 -6.7 33.6 0C23.5 6.7 10.1 6.7 0 0M0 0H33.6"/></g><g transform="translate(368.3 211.6) rotate(77)"><path d="M0 0C8.0 -5.3 18.7 -5.3 26.6 0C18.7 5.3 8.0 5.3 0 0M0 0H26.6"/></g><g transform="translate(382.4 70.4) rotate(107)"><path d="M0 0C7.0 -4.7 16.3 -4.7 23.3 0C16.3 4.7 7.0 4.7 0 0M0 0H23.3"/></g><g transform="translate(368.1 124.6) rotate(87)"><path d="M0 0C9.8 -6.6 23.0 -6.6 32.8 0C23.0 6.6 9.8 6.6 0 0M0 0H32.8"/></g><g transform="translate(374.0 96.9) rotate(345)"><path d="M0 0C9.2 -6.1 21.5 -6.1 30.7 0C21.5 6.1 9.2 6.1 0 0M0 0H30.7"/></g><g transform="translate(378.3 185.3) rotate(66)"><path d="M0 0C7.4 -5.0 17.3 -5.0 24.8 0C17.3 5.0 7.4 5.0 0 0M0 0H24.8"/></g><g transform="translate(385.3 174.9) rotate(90)"><path d="M0 0C7.6 -5.1 17.8 -5.1 25.4 0C17.8 5.1 7.6 5.1 0 0M0 0H25.4"/></g><g transform="translate(381.7 201.2) rotate(71)"><path d="M0 0C11.7 -7.8 27.4 -7.8 39.1 0C27.4 7.8 11.7 7.8 0 0M0 0H39.1"/></g><g transform="translate(384.7 129.1) rotate(152)"><path d="M0 0C7.2 -4.8 16.7 -4.8 23.9 0C16.7 4.8 7.2 4.8 0 0M0 0H23.9"/></g></g></svg><div class="abs" style="left:13.7px;top:13.1px;width:356px;height:200px;background:#fff"></div><span class="t" style="left:102.7px;top:33.5px;font-size:16.8px;color:#1f66a8;font-family:'Liberation Serif',serif;font-weight:700;letter-spacing:0.48px;">TEMPORALIZACIÓN</span><div class="abs" style="left:41.7px;top:72.4px;width:61.4px;height:61.4px;border-radius:50%;background:#8cc63f"></div><div class="abs" style="left:160.3px;top:72.4px;width:61.4px;height:61.4px;border-radius:50%;background:#3fa9c4"></div><div class="abs" style="left:278.8px;top:72.4px;width:61.4px;height:61.4px;border-radius:50%;background:#1f5f9e"></div><svg style="left:56px;top:90px;" width="34" height="20" viewBox="0 0 34 20"><path d="M3 8l14-6 14 6-14 6zM3 13l14 6 14-6M3 18l14 6 14-6" fill="none" stroke="#fff" stroke-width="2.400" stroke-linejoin="round"/></svg><svg style="left:180px;top:88px;" width="24" height="24" viewBox="0 0 24 24"><circle cx="11" cy="11" r="8.600" fill="none" stroke="#fff" stroke-width="1.800"/><path d="M11 6.500v9M6.500 11h9" stroke="#fff" stroke-width="1.800"/></svg><svg style="left:297px;top:92px;" width="28" height="20" viewBox="0 0 28 20"><rect x="1" y="1" width="16" height="12" fill="#fff"/><rect x="8" y="6" width="17" height="13" fill="#fff" stroke="#1f5f9e" stroke-width="1.500"/></svg></div>
<div id="status" class="abs"></div><span class="t" style="left:48.8px;top:1439.0px;font-size:23.5px;color:#4a4a4a;letter-spacing:0.66px;-webkit-text-stroke:0.3px #4a4a4a;">Diapositiva 1 de 6</span><span class="t" style="left:289.0px;top:1439.0px;font-size:23.5px;color:#4a4a4a;letter-spacing:0.45px;-webkit-text-stroke:0.3px #4a4a4a;">Español (España)</span><svg style="left:523px;top:1434px;" width="32" height="32" viewBox="0 0 32 32"><g fill="none" stroke="#555" stroke-width="2" stroke-linecap="round" stroke-linejoin="round"><circle cx="14" cy="5" r="2.800"/><path d="M3 10c4 2 7 2 11 2s7 0 11-2.500M14 12v7l-5 8M14 19c1 2 2 3 2 5"/><path d="M16 25l4 4 9-9"/></g></svg><span class="t" style="left:562.0px;top:1439.0px;font-size:23.5px;color:#4a4a4a;letter-spacing:1.06px;-webkit-text-stroke:0.3px #4a4a4a;">Accesibilidad: todo correcto</span><svg style="left:1447px;top:1434px;" width="28" height="28" viewBox="0 0 28 28"><path d="M13.500 1.500l5 5.500h-10z" fill="#666"/><g stroke="#666" stroke-width="2"><path d="M3 10h21M1 15h25M1 20h25M1 25h16"/></g></svg><span class="t" style="left:1483.7px;top:1439.0px;font-size:23.5px;color:#4a4a4a;letter-spacing:0.78px;-webkit-text-stroke:0.3px #4a4a4a;">Notas</span><svg style="left:1589px;top:1437px;" width="28" height="28" viewBox="0 0 28 28"><path d="M1 1h26v18H11l-6 6v-6H1z" fill="#555"/></svg><span class="t" style="left:1625.0px;top:1439.0px;font-size:23.5px;color:#4a4a4a;letter-spacing:0.88px;-webkit-text-stroke:0.3px #4a4a4a;">Comentarios</span><div class="abs" style="left:1788px;top:1427.5px;width:74px;height:44.5px;background:linear-gradient(#bdbdbd,#b0b0b0)"></div><svg style="left:1810px;top:1436px;" width="31" height="27" viewBox="0 0 31 27"><rect x="1.200" y="1.200" width="28" height="24" fill="none" stroke="#fff" stroke-width="2.400"/><rect x="13" y="5.500" width="13" height="8" fill="#fff"/><path d="M5 17.500h21M5 21.500h21" stroke="#fff" stroke-width="1.800"/><path d="M8.500 1v16" stroke="#fff" stroke-width="1.800"/></svg><svg style="left:1882px;top:1438px;" width="31" height="23" viewBox="0 0 31 23"><g fill="#4f4f4f"><rect x="0" y="0" width="13" height="9" rx="1"/><rect x="17.500" y="0" width="13" height="9" rx="1"/><rect x="0" y="13.500" width="13" height="9" rx="1"/><rect x="17.500" y="13.500" width="13" height="9" rx="1"/></g></svg><svg style="left:1953px;top:1436px;" width="33" height="27" viewBox="0 0 33 27"><path d="M16.500 4C12 1 6 1 1.500 2.500V23c4.500-1.500 10.500-1.500 15 1.500 4.500-3 10.500-3 15-1.500V2.500C27 1 21 1 16.500 4zV24.500" fill="none" stroke="#4f4f4f" stroke-width="2"/><g stroke="#4f4f4f" stroke-width="1.500"><path d="M5 7.500h8M5 11.500h8M5 15.500h8M5 19.500h8M20 7.500h8M20 11.500h8M20 15.500h8M20 19.500h8"/></g></svg><svg style="left:2025px;top:1437px;" width="32" height="27" viewBox="0 0 32 27"><rect x="1.200" y="1.200" width="29.600" height="15.600" fill="none" stroke="#4f4f4f" stroke-width="2.200"/><rect x="6" y="5" width="20" height="2.500" fill="#4f4f4f"/><path d="M16 17v7M9 25h14" stroke="#4f4f4f" stroke-width="2.400"/></svg><div class="abs" style="left:2092px;top:1447px;width:16px;height:3.5px;background:#555"></div><div class="abs" style="left:2122px;top:1445.5px;width:199px;height:7px;border-radius:3.500px;background:#9a9a9a"></div><div class="abs" style="left:2199.5px;top:1433px;width:32px;height:32px;border-radius:50%;background:#fff;box-shadow:0 1px 3px rgba(0,0,0,.35),0 0 1px rgba(0,0,0,.4)"></div><svg style="left:2335.5px;top:1440.5px;" width="17" height="17" viewBox="0 0 17 17"><path d="M8.500 0v17M0 8.500h17" stroke="#555" stroke-width="3.500"/></svg><span class="t" style="left:2387.5px;top:1439.0px;font-size:23.5px;color:#4a4a4a;letter-spacing:1.14px;-webkit-text-stroke:0.3px #4a4a4a;">92 %</span><svg style="left:2485.5px;top:1436px;" width="28" height="27" viewBox="0 0 28 27"><rect x="1.100" y="1.100" width="25.800" height="24.800" fill="none" stroke="#555" stroke-width="2.200"/><g stroke="#555" stroke-width="1.600" fill="none"><path d="M14 5v17M5 13.500h18"/><path d="M11.500 7.500L14 5l2.500 2.500M11.500 19.500L14 22l2.500-2.500M7.500 11L5 13.500 7.500 16M20.500 11l2.500 2.500-2.500 2.500"/></g></svg>
</div>
<svg style="left:0px;top:0px;" width="2560" height="1600" viewBox="0 0 2560 1600"><defs><filter id="sb"><feGaussianBlur stdDeviation=".700"/></filter></defs><g fill="#d5e3ee" filter="url(#sb)"><circle cx="148" cy="1537" r="0.7" opacity="0.25"/><circle cx="1448" cy="1592" r="0.7" opacity="0.52"/><circle cx="1016" cy="1596" r="0.7" opacity="0.51"/><circle cx="341" cy="1526" r="0.9" opacity="0.51"/><circle cx="264" cy="1545" r="1.1" opacity="0.40"/><circle cx="153" cy="1500" r="1.9" opacity="0.63"/><circle cx="460" cy="1571" r="0.9" opacity="0.52"/><circle cx="2509" cy="1489" r="1.9" opacity="0.29"/><circle cx="1080" cy="1594" r="0.9" opacity="0.62"/><circle cx="2418" cy="1533" r="0.9" opacity="0.23"/><circle cx="2542" cy="1577" r="1.3" opacity="0.59"/><circle cx="2271" cy="1517" r="2.6" opacity="0.90"/><circle cx="2347" cy="1536" r="1.0" opacity="0.45"/><circle cx="2452" cy="1493" r="1.0" opacity="0.28"/><circle cx="2128" cy="1497" r="1.3" opacity="0.20"/><circle cx="1450" cy="1593" r="0.7" opacity="0.45"/><circle cx="2230" cy="1593" r="1.9" opacity="0.42"/><circle cx="2521" cy="1529" r="0.9" opacity="0.39"/><circle cx="135" cy="1474" r="1.0" opacity="0.50"/><circle cx="2429" cy="1551" r="0.9" opacity="0.68"/><circle cx="2173" cy="1598" r="2.6" opacity="0.90"/><circle cx="2437" cy="1519" r="0.7" opacity="0.62"/><circle cx="233" cy="1580" r="1.5" opacity="0.70"/><circle cx="1871" cy="1598" r="1.3" opacity="0.46"/><circle cx="2495" cy="1484" r="0.9" opacity="0.32"/><circle cx="2152" cy="1534" r="1.5" opacity="0.64"/><circle cx="217" cy="1557" r="1.9" opacity="0.63"/><circle cx="457" cy="1573" r="1.5" opacity="0.25"/><circle cx="2422" cy="1564" r="2.6" opacity="0.90"/><circle cx="2424" cy="1565" r="1.0" opacity="0.75"/><circle cx="71" cy="1548" r="2.6" opacity="0.90"/><circle cx="374" cy="1577" r="2.6" opacity="0.90"/><circle cx="335" cy="1476" r="0.9" opacity="0.49"/><circle cx="2390" cy="1528" r="1.1" opacity="0.65"/><circle cx="2330" cy="1518" r="2.6" opacity="0.90"/><circle cx="2117" cy="1584" r="1.0" opacity="0.49"/><circle cx="10" cy="1574" r="1.0" opacity="0.28"/><circle cx="158" cy="1559" r="2.6" opacity="0.90"/><circle cx="272" cy="1544" r="1.1" opacity="0.31"/><circle cx="108" cy="1486" r="2.6" opacity="0.90"/><circle cx="2410" cy="1561" r="1.3" opacity="0.71"/><circle cx="2285" cy="1499" r="2.6" opacity="0.90"/><circle cx="311" cy="1529" r="0.9" opacity="0.57"/><circle cx="241" cy="1585" r="1.0" opacity="0.74"/><circle cx="2131" cy="1494" r="1.9" opacity="0.75"/><circle cx="756" cy="1594" r="0.9" opacity="0.74"/><circle cx="2018" cy="1595" r="0.9" opacity="0.25"/><circle cx="2099" cy="1580" r="1.3" opacity="0.42"/><circle cx="227" cy="1507" r="1.1" opacity="0.24"/><circle cx="2209" cy="1531" r="1.5" opacity="0.75"/><circle cx="2481" cy="1507" r="1.0" opacity="0.31"/><circle cx="2393" cy="1487" r="1.9" opacity="0.56"/><circle cx="2484" cy="1512" r="1.1" opacity="0.74"/><circle cx="139" cy="1490" r="0.9" opacity="0.54"/><circle cx="2252" cy="1528" r="0.7" opacity="0.25"/><circle cx="2154" cy="1583" r="1.3" opacity="0.53"/><circle cx="9" cy="1520" r="1.5" opacity="0.73"/><circle cx="2472" cy="1513" r="1.5" opacity="0.30"/><circle cx="233" cy="1576" r="1.0" opacity="0.42"/><circle cx="107" cy="1477" r="1.3" opacity="0.55"/><circle cx="216" cy="1594" r="1.0" opacity="0.56"/><circle cx="2521" cy="1493" r="1.0" opacity="0.22"/><circle cx="2138" cy="1585" r="1.9" opacity="0.60"/><circle cx="2137" cy="1575" r="1.1" opacity="0.25"/><circle cx="107" cy="1554" r="0.9" opacity="0.41"/><circle cx="48" cy="1540" r="1.1" opacity="0.47"/><circle cx="8" cy="1574" r="0.9" opacity="0.56"/><circle cx="169" cy="1566" r="1.3" opacity="0.65"/><circle cx="2166" cy="1503" r="1.1" opacity="0.33"/><circle cx="2165" cy="1484" r="1.3" opacity="0.62"/><circle cx="198" cy="1492" r="1.3" opacity="0.56"/><circle cx="342" cy="1534" r="2.6" opacity="0.90"/><circle cx="2288" cy="1499" r="0.9" opacity="0.71"/><circle cx="45" cy="1531" r="2.6" opacity="0.90"/><circle cx="2382" cy="1483" r="0.9" opacity="0.28"/><circle cx="1342" cy="1593" r="1.0" opacity="0.53"/><circle cx="288" cy="1520" r="2.6" opacity="0.90"/><circle cx="9" cy="1535" r="2.6" opacity="0.90"/><circle cx="2406" cy="1498" r="0.7" opacity="0.70"/><circle cx="1006" cy="1599" r="0.9" opacity="0.40"/><circle cx="124" cy="1487" r="1.3" opacity="0.55"/><circle cx="381" cy="1595" r="1.9" opacity="0.48"/><circle cx="2448" cy="1585" r="1.9" opacity="0.70"/><circle cx="2408" cy="1543" r="0.9" opacity="0.23"/><circle cx="2373" cy="1490" r="2.6" opacity="0.90"/><circle cx="307" cy="1554" r="0.9" opacity="0.31"/><circle cx="2319" cy="1536" r="1.1" opacity="0.45"/><circle cx="2229" cy="1522" r="1.1" opacity="0.41"/><circle cx="710" cy="1595" r="1.0" opacity="0.58"/><circle cx="2172" cy="1486" r="1.1" opacity="0.41"/><circle cx="2478" cy="1490" r="1.9" opacity="0.59"/><circle cx="2293" cy="1533" r="2.6" opacity="0.90"/><circle cx="2114" cy="1581" r="2.6" opacity="0.90"/><circle cx="279" cy="1493" r="0.9" opacity="0.72"/><circle cx="2355" cy="1555" r="1.3" opacity="0.73"/><circle cx="255" cy="1512" r="1.1" opacity="0.41"/><circle cx="27" cy="1512" r="2.6" opacity="0.90"/><circle cx="142" cy="1498" r="1.9" opacity="0.24"/><circle cx="17" cy="1511" r="0.9" opacity="0.31"/><circle cx="2483" cy="1513" r="1.1" opacity="0.33"/><circle cx="755" cy="1593" r="2.6" opacity="0.90"/><circle cx="2295" cy="1535" r="0.7" opacity="0.72"/><circle cx="375" cy="1523" r="1.1" opacity="0.21"/><circle cx="203" cy="1495" r="1.1" opacity="0.30"/><circle cx="2396" cy="1567" r="0.7" opacity="0.37"/><circle cx="2522" cy="1529" r="0.9" opacity="0.20"/><circle cx="2446" cy="1489" r="1.1" opacity="0.41"/><circle cx="159" cy="1498" r="0.9" opacity="0.69"/><circle cx="2452" cy="1551" r="1.3" opacity="0.61"/><circle cx="2423" cy="1482" r="1.1" opacity="0.26"/><circle cx="2339" cy="1576" r="1.0" opacity="0.71"/><circle cx="202" cy="1499" r="1.0" opacity="0.34"/><circle cx="166" cy="1478" r="1.5" opacity="0.29"/><circle cx="185" cy="1552" r="1.1" opacity="0.25"/></g></svg><div class="abs" style="left:468.5px;top:1474px;width:1623px;height:115.5px;border-radius:30px;background:linear-gradient(90deg,#5a7a96 0%,#58768f 40%,#52697f 70%,#4e5c68 100%);box-shadow:inset 0 0 0 1.200px rgba(190,210,228,.32)"></div><svg style="left:484.75px;top:1491px;" width="76.5" height="76.5" viewBox="0 0 76.5 76.5"><defs><linearGradient id="fg" x1="0" y1="0" x2="0" y2="1"><stop offset="0" stop-color="#35b2f6"/><stop offset="1" stop-color="#1a68e0"/></linearGradient></defs><clipPath id="fc"><rect width="76.500" height="76.500" rx="17.500"/></clipPath><g clip-path="url(#fc)"><rect width="76.500" height="76.500" fill="url(#fg)"/><path d="M42 0h35v77H47c-3-9-4.500-19-5-30h-9c0-17 3-33 9-47z" fill="#e9edf3"/><path d="M42 0c-6 14-9 30-9 47h9c.500 11 2 21 5 30" fill="none" stroke="#1b2e44" stroke-width="1.300" opacity=".55"/></g><g stroke="#17293d" stroke-width="3" stroke-linecap="round" fill="none"><path d="M19.500 22v5M56 22v5" stroke-width="3.200"/><path d="M13.500 50.500c13 10.500 36 10.500 49-.500" stroke-width="2.400"/></g></svg><svg style="left:582.75px;top:1491px;" width="76.5" height="76.5" viewBox="0 0 76.5 76.5"><rect x="0" y="0" width="76.500" height="76.500" rx="17.5" fill="#d4d9e0"/><rect x="12.8" y="13" width="15" height="14" rx="3.500" fill="#3fdc4a"/><rect x="31.1" y="13" width="15" height="14" rx="3.500" fill="#f6b822"/><rect x="49.4" y="13" width="15" height="14" rx="3.500" fill="#f07d1c"/><rect x="12.8" y="31.3" width="15" height="14" rx="3.500" fill="#d51e1e"/><rect x="31.1" y="31.3" width="15" height="14" rx="3.500" fill="#a9a9a9"/><rect x="49.4" y="31.3" width="15" height="14" rx="3.500" fill="#f0245f"/><rect x="12.8" y="49.6" width="15" height="14" rx="3.500" fill="#a134d8"/><rect x="31.1" y="49.6" width="15" height="14" rx="3.500" fill="#2f9cf5"/><rect x="49.4" y="49.6" width="15" height="14" rx="3.500" fill="#3dd69c"/></svg><svg style="left:680.75px;top:1491px;" width="76.5" height="76.5" viewBox="0 0 76.5 76.5"><defs><linearGradient id="ag" x1="0" y1="0" x2="0" y2="1"><stop offset="0" stop-color="#2aa8f6"/><stop offset="1" stop-color="#1766e0"/></linearGradient></defs><rect x="0" y="0" width="76.500" height="76.500" rx="17.5" fill="url(#ag)"/><g stroke="#fff" stroke-width="6" stroke-linecap="round" fill="none"><path d="M19.500 57.500L43.600 16.400M33.400 16.400L58 58.700M13 46H41.500M51.500 46H63.900"/></g></svg><svg style="left:778.75px;top:1491px;" width="76.5" height="76.5" viewBox="0 0 76.5 76.5"><defs><linearGradient id="sg" x1="0" y1="0" x2="0" y2="1"><stop offset="0" stop-color="#dcdddf"/><stop offset="1" stop-color="#8f8f92"/></linearGradient></defs><rect x="0" y="0" width="76.500" height="76.500" rx="17.5" fill="url(#sg)"/><circle cx="38.250" cy="38.250" r="31" fill="#3c3c3e"/><g fill="#3c3c3e"><rect x="37.150" y="4" width="2.200" height="6" transform="rotate(0 38.250 38.250)"/><rect x="37.150" y="4" width="2.200" height="6" transform="rotate(8.18182 38.250 38.250)"/><rect x="37.150" y="4" width="2.200" height="6" transform="rotate(16.3636 38.250 38.250)"/><rect x="37.150" y="4" width="2.200" height="6" transform="rotate(24.5455 38.250 38.250)"/><rect x="37.150" y="4" width="2.200" height="6" transform="rotate(32.7273 38.250 38.250)"/><rect x="37.150" y="4" width="2.200" height="6" transform="rotate(40.9091 38.250 38.250)"/><rect x="37.150" y="4" width="2.200" height="6" transform="rotate(49.0909 38.250 38.250)"/><rect x="37.150" y="4" width="2.200" height="6" transform="rotate(57.2727 38.250 38.250)"/><rect x="37.150" y="4" width="2.200" height="6" transform="rotate(65.4545 38.250 38.250)"/><rect x="37.150" y="4" width="2.200" height="6" transform="rotate(73.6364 38.250 38.250)"/><rect x="37.150" y="4" width="2.200" height="6" transform="rotate(81.8182 38.250 38.250)"/><rect x="37.150" y="4" width="2.200" height="6" transform="rotate(90 38.250 38.250)"/><rect x="37.150" y="4" width="2.200" height="6" transform="rotate(98.1818 38.250 38.250)"/><rect x="37.150" y="4" width="2.200" height="6" transform="rotate(106.364 38.250 38.250)"/><rect x="37.150" y="4" width="2.200" height="6" transform="rotate(114.545 38.250 38.250)"/><rect x="37.150" y="4" width="2.200" height="6" transform="rotate(122.727 38.250 38.250)"/><rect x="37.150" y="4" width="2.200" height="6" transform="rotate(130.909 38.250 38.250)"/><rect x="37.150" y="4" width="2.200" height="6" transform="rotate(139.091 38.250 38.250)"/><rect x="37.150" y="4" width="2.200" height="6" transform="rotate(147.273 38.250 38.250)"/><rect x="37.150" y="4" width="2.200" height="6" transform="rotate(155.455 38.250 38.250)"/><rect x="37.150" y="4" width="2.200" height="6" transform="rotate(163.636 38.250 38.250)"/><rect x="37.150" y="4" width="2.200" height="6" transform="rotate(171.818 38.250 38.250)"/><rect x="37.150" y="4" width="2.200" height="6" transform="rotate(180 38.250 38.250)"/><rect x="37.150" y="4" width="2.200" height="6" transform="rotate(188.182 38.250 38.250)"/><rect x="37.150" y="4" width="2.200" height="6" transform="rotate(196.364 38.250 38.250)"/><rect x="37.150" y="4" width="2.200" height="6" transform="rotate(204.545 38.250 38.250)"/><rect x="37.150" y="4" width="2.200" height="6" transform="rotate(212.727 38.250 38.250)"/><rect x="37.150" y="4" width="2.200" height="6" transform="rotate(220.909 38.250 38.250)"/><rect x="37.150" y="4" width="2.200" height="6" transform="rotate(229.091 38.250 38.250)"/><rect x="37.150" y="4" width="2.200" height="6" transform="rotate(237.273 38.250 38.250)"/><rect x="37.150" y="4" width="2.200" height="6" transform="rotate(245.455 38.250 38.250)"/><rect x="37.150" y="4" width="2.200" height="6" transform="rotate(253.636 38.250 38.250)"/><rect x="37.150" y="4" width="2.200" height="6" transform="rotate(261.818 38.250 38.250)"/><rect x="37.150" y="4" width="2.200" height="6" transform="rotate(270 38.250 38.250)"/><rect x="37.150" y="4" width="2.200" height="6" transform="rotate(278.182 38.250 38.250)"/><rect x="37.150" y="4" width="2.200" height="6" transform="rotate(286.364 38.250 38.250)"/><rect x="37.150" y="4" width="2.200" height="6" transform="rotate(294.545 38.250 38.250)"/><rect x="37.150" y="4" width="2.200" height="6" transform="rotate(302.727 38.250 38.250)"/><rect x="37.150" y="4" width="2.200" height="6" transform="rotate(310.909 38.250 38.250)"/><rect x="37.150" y="4" width="2.200" height="6" transform="rotate(319.091 38.250 38.250)"/><rect x="37.150" y="4" width="2.200" height="6" transform="rotate(327.273 38.250 38.250)"/><rect x="37.150" y="4" width="2.200" height="6" transform="rotate(335.455 38.250 38.250)"/><rect x="37.150" y="4" width="2.200" height="6" transform="rotate(343.636 38.250 38.250)"/><rect x="37.150" y="4" width="2.200" height="6" transform="rotate(351.818 38.250 38.250)"/></g><circle cx="38.250" cy="38.250" r="26.500" fill="#77777a"/><circle cx="38.250" cy="38.250" r="21.500" fill="#4b4b4d"/><g stroke="#a6a6a9" stroke-width="4" stroke-linecap="round" transform="rotate(90 38.250 38.250)"><path d="M38.250 38.250V17M38.250 38.250L56.600 48.900M38.250 38.250L19.900 48.900"/></g><circle cx="38.250" cy="38.250" r="6" fill="#9b9b9e"/><circle cx="38.250" cy="38.250" r="22.500" fill="none" stroke="#a7a7aa" stroke-width="3.500"/></svg><svg style="left:876.75px;top:1491px;" width="76.5" height="76.5" viewBox="0 0 76.5 76.5"><rect x="0" y="0" width="76.500" height="76.500" rx="17.5" fill="#f6f6f6"/><circle cx="38.25" cy="38.25" r="33.5" fill="#fff"/><path d="M9.24 21.50 A33.5 33.5 0 0 1 67.26 21.50 L38.25 38.25 Z" fill="#e23a2e"/><path d="M67.26 21.50 A33.5 33.5 0 0 1 38.25 71.75 L38.25 38.25 Z" fill="#f7c22b"/><path d="M38.25 71.75 A33.5 33.5 0 0 1 9.24 21.50 L38.25 38.25 Z" fill="#2e9e4b"/><path d="M9.24 21.50 L51.41 30.65 L38.25 38.25 Z" fill="#e23a2e"/><path d="M38.25 23.05 h29 l-14 24z" fill="#f7c22b"/><circle cx="38.25" cy="38.25" r="15.200" fill="#fff"/><circle cx="38.25" cy="38.25" r="12" fill="#3778e6"/></svg><svg style="left:974.75px;top:1491px;" width="76.5" height="76.5" viewBox="0 0 76.5 76.5"><rect x="0" y="0" width="76.500" height="76.500" rx="17.5" fill="#f7f7f7"/><clipPath id="cc"><rect width="76.500" height="76.500" rx="17.500"/></clipPath><rect width="76.500" height="21.500" fill="#e9383f" clip-path="url(#cc)"/></svg><span class="t" style="left:997.5px;top:1499.0px;font-size:15.5px;color:#fff;font-weight:700;letter-spacing:-0.01px;">JUN</span><span class="t" style="left:986.5px;top:1519.5px;font-size:50px;color:#2b2b2b;letter-spacing:-2.62px;-webkit-text-stroke:1.200px #f7f7f7;">20</span><svg style="left:1072.75px;top:1491px;" width="76.5" height="76.5" viewBox="0 0 76.5 76.5"><rect x="0" y="0" width="76.500" height="76.500" rx="17.5" fill="#fbfaf5"/><clipPath id="nc"><rect width="76.500" height="76.500" rx="17.500"/></clipPath><g clip-path="url(#nc)"><rect width="76.500" height="19.500" fill="#fbcc2f"/><rect y="18.500" width="76.500" height="2" fill="#e9b820"/><g stroke="#dcdcd6" stroke-width="1.200"><path d="M0 36h77M0 49h77M0 62h77"/></g><path d="M4 24.500h69" stroke="#d8d8d2" stroke-width="1" stroke-dasharray="1.500 1.500"/></g></svg><svg style="left:1170.75px;top:1491px;" width="76.5" height="76.5" viewBox="0 0 76.5 76.5"><rect x="0" y="0" width="76.500" height="76.500" rx="17.5" fill="#fbfbfb"/><rect x="26" y="12.500" width="36.500" height="50" rx="3" fill="#2b7cd3"/><rect x="26" y="25" width="36.500" height="12.500" fill="#1f63c0"/><rect x="26" y="37.500" width="36.500" height="12.500" fill="#1a52a8"/><path d="M26 50h36.500v9.500a3 3 0 0 1-3 3H29a3 3 0 0 1-3-3z" fill="#123e8a"/><rect x="8" y="23.500" width="30" height="29" rx="3" fill="#1c57b5"/></svg><span class="t" style="left:1183.8px;top:1517.0px;font-size:21px;color:#fff;font-weight:700;">W</span><svg style="left:1268.75px;top:1491px;" width="76.5" height="76.5" viewBox="0 0 76.5 76.5"><rect x="0" y="0" width="76.500" height="76.500" rx="17.5" fill="#fbfbfb"/><circle cx="43" cy="37" r="25" fill="#e8503a"/><path d="M43 12a25 25 0 0 1 25 25H43z" fill="#f47b63"/><path d="M18 37h50a25 25 0 0 1-50 0z" fill="#d03a2a"/><path d="M43 37h25a25 25 0 0 1-7 17.500L43 54z" fill="#c03325" opacity=".55"/><rect x="8" y="23.500" width="29" height="28" rx="3" fill="#c23627"/></svg><span class="t" style="left:1284.3px;top:1517.0px;font-size:21px;color:#fff;font-weight:700;">P</span><svg style="left:1365.5px;top:1489.5px;" width="79" height="79" viewBox="0 0 79 79"><circle cx="39.500" cy="39.500" r="39.500" fill="#21d760"/><g fill="none" stroke="#0d0f0d" stroke-linecap="round"><path d="M15 27.500c17-5.500 35-4 50 4.500" stroke-width="8.200"/><path d="M18 42c14-4.500 29-3 41 4" stroke-width="6.600"/><path d="M21.500 55c11-3.500 22-2.500 32 3" stroke-width="5.200"/></g></svg><svg style="left:1464.75px;top:1491px;" width="76.5" height="76.5" viewBox="0 0 76.5 76.5"><rect x="0" y="0" width="76.500" height="76.500" rx="17.5" fill="#fbfbfb"/><ellipse cx="38.250" cy="20.500" rx="9.800" ry="16" fill="#f5a623" opacity=".82" transform="rotate(0 38.250 38.250)"/><ellipse cx="38.250" cy="20.500" rx="9.800" ry="16" fill="#f2d427" opacity=".82" transform="rotate(45 38.250 38.250)"/><ellipse cx="38.250" cy="20.500" rx="9.800" ry="16" fill="#8cd147" opacity=".82" transform="rotate(90 38.250 38.250)"/><ellipse cx="38.250" cy="20.500" rx="9.800" ry="16" fill="#38c5a4" opacity=".82" transform="rotate(135 38.250 38.250)"/><ellipse cx="38.250" cy="20.500" rx="9.800" ry="16" fill="#4a9cf0" opacity=".82" transform="rotate(180 38.250 38.250)"/><ellipse cx="38.250" cy="20.500" rx="9.800" ry="16" fill="#8a6ae0" opacity=".82" transform="rotate(225 38.250 38.250)"/><ellipse cx="38.250" cy="20.500" rx="9.800" ry="16" fill="#d560c8" opacity=".82" transform="rotate(270 38.250 38.250)"/><ellipse cx="38.250" cy="20.500" rx="9.800" ry="16" fill="#f0564a" opacity=".82" transform="rotate(315 38.250 38.250)"/></svg><svg style="left:1562.75px;top:1491px;" width="76.5" height="76.5" viewBox="0 0 76.5 76.5"><rect x="0" y="0" width="76.500" height="76.500" rx="17.5" fill="#f4f6fa"/><clipPath id="pc"><rect x="5" y="5" width="66.500" height="66.500" rx="11"/></clipPath><g clip-path="url(#pc)"><rect x="5" y="5" width="66.500" height="36" fill="#8fa9dc"/><rect x="5" y="30" width="66.500" height="11" fill="#b9c9e6"/><rect x="5" y="40" width="66.500" height="9" fill="#35557e"/><rect x="5" y="47" width="66.500" height="25" fill="#dfe4ea"/><path d="M5 55c10-5 22 2 32-1s20 4 35 0v18H5z" fill="#a9a79e"/></g><g><ellipse cx="55" cy="45.500" rx="13.500" ry="4" fill="#2a2a2a"/><rect x="41.500" y="45" width="27" height="9" fill="#111"/><path d="M41 54h28l4 17c0 6-36 6-36 0z" fill="#cfd3d6" opacity=".92"/><ellipse cx="55" cy="54" rx="14" ry="3" fill="#333"/><path d="M44 62c4-2 8 1 11-1s6 1 9 0l2 7H42z" fill="#8a8f95" opacity=".8"/></g></svg><svg style="left:1660.75px;top:1491px;" width="76.5" height="76.5" viewBox="0 0 76.5 76.5"><defs><linearGradient id="qs" x1="0" y1="0" x2="0" y2="1"><stop offset="0" stop-color="#e6e9ee"/><stop offset="1" stop-color="#8f959e"/></linearGradient><radialGradient id="qb" cx="50%" cy="65%" r="65%"><stop offset="0" stop-color="#5fd0ff"/><stop offset=".6" stop-color="#1f8fe8"/><stop offset="1" stop-color="#0d4fb0"/></radialGradient></defs><rect x="0" y="0" width="76.500" height="76.500" rx="17.5" fill="#1c1c1e"/><circle cx="38" cy="36" r="27.500" fill="url(#qs)"/><circle cx="38" cy="36" r="19.500" fill="url(#qb)"/><path d="M34 30l22 29 9-6.500-22-27z" fill="#b9bec5"/><path d="M36 31l6-4.500 7 9-7 4z" fill="#e2e6ea"/><ellipse cx="38" cy="27" rx="13" ry="7" fill="#fff" opacity=".28"/></svg><div class="abs" style="left:518.7px;top:1578px;width:6.6px;height:6.6px;border-radius:50%;background:#081428"></div><div class="abs" style="left:910.7px;top:1578px;width:6.6px;height:6.6px;border-radius:50%;background:#081428"></div><div class="abs" style="left:1302.7px;top:1578px;width:6.6px;height:6.6px;border-radius:50%;background:#081428"></div><div class="abs" style="left:1694.7px;top:1578px;width:6.6px;height:6.6px;border-radius:50%;background:#081428"></div><div class="abs" style="left:1770.5px;top:1490.5px;width:1.6px;height:82.5px;background:#2a3644"></div><svg style="left:1801.5px;top:1500px;" width="81" height="68" viewBox="0 0 81 68"><path d="M2 8a6 6 0 0 1 6-6h17c3 0 5 1.500 7 4l2 2.500h39a6 6 0 0 1 6 6V20H2z" fill="#4fb0ea"/><rect x="1" y="12.500" width="79" height="54" rx="6" fill="url(#fo)"/></svg><svg style="left:0px;top:0px;" width="0" height="0" viewBox="0 0 0 0"><defs><linearGradient id="fo" x1="0" y1="0" x2="0" y2="1"><stop offset="0" stop-color="#78cdf8"/><stop offset="1" stop-color="#5bbcf2"/></linearGradient></defs></svg><div class="abs" style="left:1899.5px;top:1500px;width:79px;height:66.5px;background:#f1f1f1;box-shadow:0 1px 2px rgba(0,0,0,.35)"></div><div class="abs" style="left:1903.5px;top:1504.5px;width:71px;height:5px;background:#dcdcdc"></div><div class="abs" style="left:1903.5px;top:1513px;width:36.5px;height:42px;background:#8fc3e8"></div><svg style="left:1940px;top:1513px;overflow:hidden" width="34.500" height="42"><use href="#paint" x="0" y="0" width="34.500" height="42"/></svg><div class="abs" style="left:1903.5px;top:1557px;width:71px;height:5.5px;background:#e2e2e2"></div><span class="t" style="left:1912.1px;top:1527.0px;font-size:4px;color:#1268b4;font-family:'DejaVu Sans Mono',monospace;font-weight:700;">EL CICLO</span><span class="t" style="left:1912.1px;top:1532.5px;font-size:4px;color:#1268b4;font-family:'DejaVu Sans Mono',monospace;font-weight:700;">DEL AGUA</span><svg style="left:2002px;top:1486px;" width="72" height="86" viewBox="0 0 72 86"><defs><linearGradient id="tg" x1="0" y1="0" x2="1" y2="0"><stop offset="0" stop-color="#c9ced3"/><stop offset=".35" stop-color="#eef0f2"/><stop offset=".75" stop-color="#dfe3e6"/><stop offset="1" stop-color="#b9bfc5"/></linearGradient></defs><path d="M3 10h66l-8 68c-1 7-49 7-50 0z" fill="url(#tg)" opacity=".93"/><ellipse cx="36" cy="10" rx="33.500" ry="8.500" fill="#e9ecee"/><ellipse cx="36" cy="11" rx="29" ry="6" fill="#bfc6cc"/><ellipse cx="36" cy="12.500" rx="27" ry="4.500" fill="#d3d8dc"/></svg><svg style="left:1644px;top:1359px;" width="28" height="40" viewBox="0 0 28 40"><path d="M2.500 2.500v29l6.800-6.300 4.800 11.300 5-2.200-4.800-11 9.200-.500z" fill="#000" stroke="#fff" stroke-width="2.200" stroke-linejoin="round"/></svg>

</div>
</body>
</html>
